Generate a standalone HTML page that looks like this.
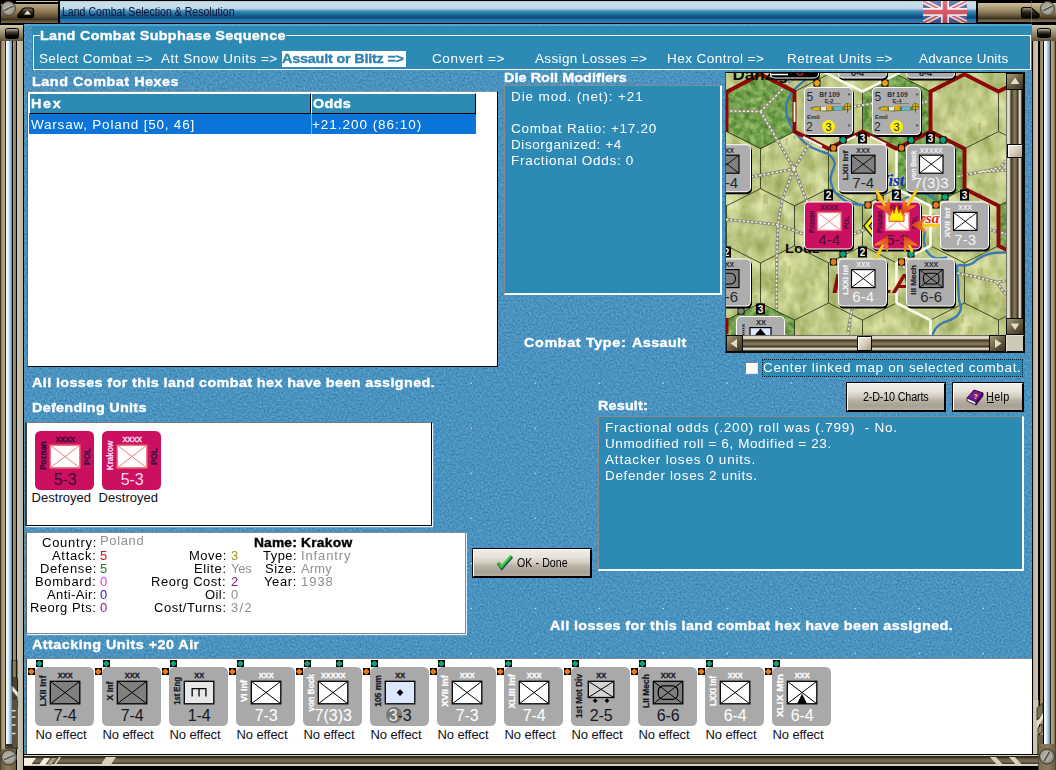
<!DOCTYPE html>
<html>
<head>
<meta charset="utf-8">
<title>Land Combat Selection &amp; Resolution</title>
<style>
html,body{margin:0;padding:0;background:#4a93c1;}
body{width:1056px;height:770px;overflow:hidden;font-family:"Liberation Sans",sans-serif;}
#root{position:relative;width:1056px;height:770px;overflow:hidden;background:#4a93c1;font-family:"Liberation Sans",sans-serif;}
#root div,#root span,#root svg{box-sizing:border-box;}
.btn{position:absolute;background:linear-gradient(#f0ede6 0%,#e6e2da 28%,#d2ccc0 48%,#bab2a4 62%,#a8a092 84%,#b6aea0 100%);border:1px solid #000;border-top-color:#fff;border-left-color:#fff;box-shadow:0 0 0 1px #000;}
</style>
</head>
<body>
<div id="root">
<svg style="position:absolute;left:0;top:0" width="1056" height="770"><defs>
<filter id="nz" x="0" y="0" width="100%" height="100%" color-interpolation-filters="sRGB"><feTurbulence type="fractalNoise" baseFrequency="0.5" numOctaves="2" seed="7" result="n"/><feColorMatrix type="matrix" values="0.32 0 0 0 0.13  0.24 0 0 0 0.453  0.19 0 0 0 0.655  0 0 0 0 1"/></filter>
</defs><rect width="1056" height="770" fill="#4a92bf"/><rect width="1056" height="770" filter="url(#nz)"/><rect x="470.6" y="382.6" width="1.200" height="1.200" fill="#e8f8ff" opacity="0.9"/><rect x="470.6" y="427.6" width="1.200" height="1.200" fill="#e8f8ff" opacity="0.9"/><rect x="470.6" y="472.7" width="1.200" height="1.200" fill="#e8f8ff" opacity="0.9"/><rect x="470.6" y="517.7" width="1.200" height="1.200" fill="#e8f8ff" opacity="0.9"/><rect x="470.6" y="562.8" width="1.200" height="1.200" fill="#e8f8ff" opacity="0.9"/><rect x="470.6" y="607.9" width="1.200" height="1.200" fill="#e8f8ff" opacity="0.9"/><rect x="470.6" y="652.9" width="1.200" height="1.200" fill="#e8f8ff" opacity="0.9"/><rect x="534.6" y="382.6" width="1.200" height="1.200" fill="#e8f8ff" opacity="0.9"/><rect x="534.6" y="427.6" width="1.200" height="1.200" fill="#e8f8ff" opacity="0.9"/><rect x="534.6" y="472.7" width="1.200" height="1.200" fill="#e8f8ff" opacity="0.9"/><rect x="534.6" y="517.7" width="1.200" height="1.200" fill="#e8f8ff" opacity="0.9"/><rect x="534.6" y="562.8" width="1.200" height="1.200" fill="#e8f8ff" opacity="0.9"/><rect x="534.6" y="607.9" width="1.200" height="1.200" fill="#e8f8ff" opacity="0.9"/><rect x="534.6" y="652.9" width="1.200" height="1.200" fill="#e8f8ff" opacity="0.9"/><rect x="598.6" y="382.6" width="1.200" height="1.200" fill="#e8f8ff" opacity="0.9"/><rect x="598.6" y="427.6" width="1.200" height="1.200" fill="#e8f8ff" opacity="0.9"/><rect x="598.6" y="472.7" width="1.200" height="1.200" fill="#e8f8ff" opacity="0.9"/><rect x="598.6" y="517.7" width="1.200" height="1.200" fill="#e8f8ff" opacity="0.9"/><rect x="598.6" y="562.8" width="1.200" height="1.200" fill="#e8f8ff" opacity="0.9"/><rect x="598.6" y="607.9" width="1.200" height="1.200" fill="#e8f8ff" opacity="0.9"/><rect x="598.6" y="652.9" width="1.200" height="1.200" fill="#e8f8ff" opacity="0.9"/><rect x="662.6" y="382.6" width="1.200" height="1.200" fill="#e8f8ff" opacity="0.9"/><rect x="662.6" y="427.6" width="1.200" height="1.200" fill="#e8f8ff" opacity="0.9"/><rect x="662.6" y="472.7" width="1.200" height="1.200" fill="#e8f8ff" opacity="0.9"/><rect x="662.6" y="517.7" width="1.200" height="1.200" fill="#e8f8ff" opacity="0.9"/><rect x="662.6" y="562.8" width="1.200" height="1.200" fill="#e8f8ff" opacity="0.9"/><rect x="662.6" y="607.9" width="1.200" height="1.200" fill="#e8f8ff" opacity="0.9"/><rect x="662.6" y="652.9" width="1.200" height="1.200" fill="#e8f8ff" opacity="0.9"/><rect x="726.6" y="382.6" width="1.200" height="1.200" fill="#e8f8ff" opacity="0.9"/><rect x="726.6" y="427.6" width="1.200" height="1.200" fill="#e8f8ff" opacity="0.9"/><rect x="726.6" y="472.7" width="1.200" height="1.200" fill="#e8f8ff" opacity="0.9"/><rect x="726.6" y="517.7" width="1.200" height="1.200" fill="#e8f8ff" opacity="0.9"/><rect x="726.6" y="562.8" width="1.200" height="1.200" fill="#e8f8ff" opacity="0.9"/><rect x="726.6" y="607.9" width="1.200" height="1.200" fill="#e8f8ff" opacity="0.9"/><rect x="726.6" y="652.9" width="1.200" height="1.200" fill="#e8f8ff" opacity="0.9"/><rect x="790.6" y="382.6" width="1.200" height="1.200" fill="#e8f8ff" opacity="0.9"/><rect x="790.6" y="427.6" width="1.200" height="1.200" fill="#e8f8ff" opacity="0.9"/><rect x="790.6" y="472.7" width="1.200" height="1.200" fill="#e8f8ff" opacity="0.9"/><rect x="790.6" y="517.7" width="1.200" height="1.200" fill="#e8f8ff" opacity="0.9"/><rect x="790.6" y="562.8" width="1.200" height="1.200" fill="#e8f8ff" opacity="0.9"/><rect x="790.6" y="607.9" width="1.200" height="1.200" fill="#e8f8ff" opacity="0.9"/><rect x="790.6" y="652.9" width="1.200" height="1.200" fill="#e8f8ff" opacity="0.9"/><rect x="854.6" y="382.6" width="1.200" height="1.200" fill="#e8f8ff" opacity="0.9"/><rect x="854.6" y="427.6" width="1.200" height="1.200" fill="#e8f8ff" opacity="0.9"/><rect x="854.6" y="472.7" width="1.200" height="1.200" fill="#e8f8ff" opacity="0.9"/><rect x="854.6" y="517.7" width="1.200" height="1.200" fill="#e8f8ff" opacity="0.9"/><rect x="854.6" y="562.8" width="1.200" height="1.200" fill="#e8f8ff" opacity="0.9"/><rect x="854.6" y="607.9" width="1.200" height="1.200" fill="#e8f8ff" opacity="0.9"/><rect x="854.6" y="652.9" width="1.200" height="1.200" fill="#e8f8ff" opacity="0.9"/><rect x="918.6" y="382.6" width="1.200" height="1.200" fill="#e8f8ff" opacity="0.9"/><rect x="918.6" y="427.6" width="1.200" height="1.200" fill="#e8f8ff" opacity="0.9"/><rect x="918.6" y="472.7" width="1.200" height="1.200" fill="#e8f8ff" opacity="0.9"/><rect x="918.6" y="517.7" width="1.200" height="1.200" fill="#e8f8ff" opacity="0.9"/><rect x="918.6" y="562.8" width="1.200" height="1.200" fill="#e8f8ff" opacity="0.9"/><rect x="918.6" y="607.9" width="1.200" height="1.200" fill="#e8f8ff" opacity="0.9"/><rect x="918.6" y="652.9" width="1.200" height="1.200" fill="#e8f8ff" opacity="0.9"/><rect x="982.6" y="382.6" width="1.200" height="1.200" fill="#e8f8ff" opacity="0.9"/><rect x="982.6" y="427.6" width="1.200" height="1.200" fill="#e8f8ff" opacity="0.9"/><rect x="982.6" y="472.7" width="1.200" height="1.200" fill="#e8f8ff" opacity="0.9"/><rect x="982.6" y="517.7" width="1.200" height="1.200" fill="#e8f8ff" opacity="0.9"/><rect x="982.6" y="562.8" width="1.200" height="1.200" fill="#e8f8ff" opacity="0.9"/><rect x="982.6" y="607.9" width="1.200" height="1.200" fill="#e8f8ff" opacity="0.9"/><rect x="982.6" y="652.9" width="1.200" height="1.200" fill="#e8f8ff" opacity="0.9"/></svg>
<div style="position:absolute;left:0px;top:0px;width:1056px;height:24px;background:linear-gradient(#000 0,#000 0.800px,#a8c4d0 1px,#c6dce8 2px,#c8dde9 8px,#9cc4dc 9.500px,#5a9cc4 10.500px,#3484b0 12px,#2270a0 14px,#145888 16px,#0c4a78 18px,#2472a8 19.500px,#2c7ab0 22.500px,#000 22.800px,#000 24px);"></div>
<div style="position:absolute;left:0px;top:1px;width:60px;height:23px;background:#000;"></div>
<div style="position:absolute;left:1px;top:3.5px;width:57px;height:19px;background:linear-gradient(#b8a884 0,#a4926c 20%,#86744e 45%,#5a4a30 70%,#3a2e1c 82%,#665638 90%,#72623e 100%);"></div>
<div style="position:absolute;left:16px;top:1px;width:42px;height:1.3px;background:#d0c8b0;"></div>
<div style="position:absolute;left:978px;top:1px;width:62px;height:1.3px;background:#b8d0e0;"></div>
<svg style="position:absolute;left:0;top:0" width="60" height="24">
<circle cx="8.5" cy="8.5" r="7" fill="#8d8a80" stroke="#4a4538" stroke-width="1"/><circle cx="8" cy="8" r="5.5" fill="#a8a59b"/><path d="M3.5 10.5 L13 6" stroke="#55524a" stroke-width="1.6"/><path d="M3.5 9.3 L12.6 5" stroke="#d8d6cc" stroke-width="0.7"/>
<defs><linearGradient id="slg" x1="0" y1="0" x2="0" y2="1"><stop offset="0" stop-color="#8a8068"/><stop offset="0.45" stop-color="#2a241a"/><stop offset="1" stop-color="#000"/></linearGradient></defs><path d="M18 15.2 L22.4 9.4 Q23.2 8 25 8 L31 8 Q33.6 8 33.6 10.4 L33.6 15 Q33.6 17.6 31 17.6 L20 17.6 Q17 17.6 18 15.2 Z" fill="url(#slg)" stroke="#000" stroke-width="1.2"/>
<path d="M24 14.500 L27.500 10.500 L31 14.500 Z" fill="#e8e4d4"/>
</svg>
<div style="position:absolute;left:976px;top:1px;width:80px;height:23px;background:#000;"></div>
<div style="position:absolute;left:978px;top:3px;width:78px;height:19px;background:linear-gradient(#cbbd9c 0,#b5a482 20%,#93825f 45%,#5e5038 70%,#3a3020 82%,#6e6046 90%,#7a6c50 100%);"></div>
<svg style="position:absolute;left:976px;top:0" width="80" height="24">
<defs><linearGradient id="slg2" x1="0" y1="0" x2="0" y2="1"><stop offset="0" stop-color="#a89e88"/><stop offset="0.45" stop-color="#2a241a"/><stop offset="1" stop-color="#000"/></linearGradient></defs><path d="M45.500 10 Q45.500 7.500 48 7.500 L55 7.500 L63 14.500 Q64 18 60 18 L48 18 Q45.500 18 45.500 15.500 Z" fill="url(#slg2)" stroke="#000" stroke-width="1.200"/>
<circle cx="71.500" cy="8.500" r="7" fill="#8d8a80" stroke="#4a4538" stroke-width="1"/><circle cx="71" cy="8" r="5.500" fill="#a8a59b"/><path d="M67 10.500 L76 6" stroke="#55524a" stroke-width="1.600"/><path d="M67 9.300 L75.600 5" stroke="#d8d6cc" stroke-width="0.700"/>
<path d="M55.500 1 L55.500 23" stroke="#5c8cb8" stroke-width="0.600"/>
</svg>
<svg style="position:absolute;left:923px;top:1px" width="44" height="22" viewBox="0 0 44 22">
<defs><linearGradient id="fg" x1="0" y1="0" x2="0" y2="1"><stop offset="0" stop-color="#fff" stop-opacity="0.25"/><stop offset="0.45" stop-color="#fff" stop-opacity="0.1"/><stop offset="1" stop-color="#000" stop-opacity="0.15"/></linearGradient></defs>
<rect width="44" height="22" fill="#4a5a96"/>
<path d="M0 0 L44 22 M44 0 L0 22" stroke="#f0ecf0" stroke-width="5"/>
<path d="M0 0 L44 22 M44 0 L0 22" stroke="#d8505c" stroke-width="1.800"/>
<path d="M22 0 V22 M0 11 H44" stroke="#f0ecf0" stroke-width="8"/>
<path d="M22 0 V22 M0 11 H44" stroke="#d44858" stroke-width="4.500"/>
<rect width="44" height="22" fill="url(#fg)"/>
</svg>
<span style="position:absolute;left:61.5px;top:6.00px;font-size:12px;line-height:12px;white-space:pre;color:#0c1238;transform:scaleX(0.8800);transform-origin:0 0;">Land Combat Selection &amp; Resolution</span>
<div style="position:absolute;left:0px;top:24px;width:24px;height:732px;background:linear-gradient(90deg,#3a3020 0,#3a3020 0.800px,#7a6c4c 0.800px,#a89a78 2.500px,#b8aa88 4.800px,#2a2418 5px,#2a2418 5.800px,#f8fbfe 6px,#eef4fa 8px,#c0d8ee 9.2px,#88b0d8 10.8px,#5c88bc 12px,#000 12px,#000 13px,#a89878 13px,#8a7c5c 16px,#000 16px,#000 17.500px,#cfc6b0 17.500px,#c4bca4 21px,#b8b098 23px,#000 23px,#000 24px);"></div>
<div style="position:absolute;left:0px;top:24px;width:24px;height:17px;background:linear-gradient(#000 0,#000 1px,#cfc6ac 1px,#b0a484 6px,#857858 12px,#5a5038 17px);"></div>
<div style="position:absolute;left:5px;top:27.5px;width:14px;height:11px;background:linear-gradient(#b8b09c,#4a4436 35%,#0c0a06 70%,#000);border-radius:2.500px;border:1px solid #000;"></div>
<div style="position:absolute;left:23px;top:24px;width:1px;height:732px;background:#000;"></div>
<svg style="position:absolute;left:0;top:660px" width="24" height="90">
<rect x="12" y="0" width="5.6" height="86" fill="#4a4232"/>
<rect x="13" y="0" width="3.4" height="17" fill="#8a7c5c"/>
<path d="M12 0 V26 L17.6 32 V20 L16.4 17 V0 Z" fill="none" stroke="#15120c" stroke-width="1"/>
<path d="M12.5 26 L17.6 32 V37 L12.5 31 Z" fill="#ece6d6"/>
<path d="M15 37.5 L17.6 40 V47 L15 45 Z" fill="#a89a78" stroke="#15120c" stroke-width="0.8"/>
<rect x="12" y="40" width="5.6" height="46" fill="#5a5040"/>
<path d="M12 50.7 H15.6 M12 57 H15.6 M12 65 H15.6 M12 73.5 H15.6" stroke="#e0dac8" stroke-width="1.6"/>
<path d="M5 84 H12.5 V86 Q9 90 6.2 86 Z" fill="#3a3020"/>
<rect x="5" y="86.5" width="13" height="4" fill="#4a4030"/>
</svg>
<div style="position:absolute;left:1032px;top:24px;width:24px;height:732px;background:linear-gradient(90deg,#000 0,#000 1px,#b8b098 1px,#c4bca4 3px,#cfc6b0 6.500px,#000 6.500px,#000 7.800px,#8a7c5c 7.800px,#a89878 11px,#000 11px,#000 12px,#f8fbfe 12px,#eef4fa 14px,#c0d8ee 15.2px,#88b0d8 16.8px,#5c88bc 18px,#2a2418 18px,#2a2418 18.700px,#b8aa88 18.700px,#a89a78 21px,#7a6c4c 23.200px,#3a3020 23.200px,#3a3020 24px);"></div>
<div style="position:absolute;left:1032px;top:24px;width:24px;height:17px;background:linear-gradient(#000 0,#000 1px,#cfc6ac 1px,#b0a484 6px,#857858 12px,#5a5038 17px);"></div>
<div style="position:absolute;left:1037px;top:27.5px;width:14px;height:10.5px;background:linear-gradient(#c8c0ac,#4a4436 35%,#0c0a06 70%,#000);border-radius:2.500px;border:1px solid #000;"></div>
<svg style="position:absolute;left:1032px;top:700px" width="24" height="70">
<rect x="1" y="0" width="5.5" height="56" fill="#cfc6b0"/>
<path d="M5 8 L11 3 V14 L5 20 Z" fill="#7a7058" stroke="#2a261c" stroke-width="0.800"/>
<path d="M5 22 L11 13 V19 L5 28 Z" fill="#e4dece"/>
<path d="M6 28 L10 24 V32 L6 35 Z" fill="#9a9078" stroke="#2a261c" stroke-width="0.800"/>
<rect x="5" y="35" width="6" height="20" fill="#6a6048"/>
</svg>
<div style="position:absolute;left:0px;top:754px;width:1056px;height:16px;background:linear-gradient(#000 0,#000 0.800px,#e8e2d0 0.800px,#d0c8b4 2.500px,#2a261c 2.500px,#3a3426 3.500px,#6a6048 5px,#7a7058 7px,#5c5440 9px,#2a261c 10px,#e0dac8 10px,#d0c8b4 12.500px,#000 12.500px,#000 16px);"></div>
<svg style="position:absolute;left:0;top:754px" width="1056" height="16">
<path d="M24 4 H36 L31 11 H24 Z" fill="#f4f0e4"/>
<path d="M44 4 H50 L45 11 H39 Z" fill="#f4f0e4"/>
<path d="M52 4 H56 L51 11 H47 Z" fill="#a89e84"/>
<path d="M101 10.500 L106 3 H116 L111 10.500 Z" fill="#d8d2c0"/><path d="M60 3 L55 10.500" stroke="#e0dac8" stroke-width="1.500"/>
<path d="M990 3 L998 12 H1004 L996 3 Z M1009 3 L1017 12 H1023 L1015 3 Z" fill="#d8d2c0"/>
</svg>
<div style="position:absolute;left:0px;top:749px;width:24px;height:21px;background:linear-gradient(90deg,#3a3020 0,#6a5c40 1px,#8a7c5c 8px,#6a5c40 16px,#000 16.5px,#000 17.5px,#cfc6b0 17.5px,#b8b098 23px,#000 23px);"></div>
<div style="position:absolute;left:1038px;top:744px;width:18px;height:26px;background:linear-gradient(90deg,#2a2418 0,#7a6c4c 1px,#8a7c5c 10px,#6a5c40 17px,#3a3020 18px);"></div>
<svg style="position:absolute;left:0;top:746px" width="24" height="24"><circle cx="9" cy="11.500" r="7.500" fill="#8d8a80" stroke="#3a3426" stroke-width="1"/><circle cx="8.500" cy="11" r="5.800" fill="#aaa79d"/><path d="M4 13.500 L14 9" stroke="#55524a" stroke-width="1.700"/><path d="M4 12.300 L13.600 8" stroke="#d8d6cc" stroke-width="0.700"/></svg>
<svg style="position:absolute;left:1034px;top:745px" width="22" height="25"><circle cx="13" cy="11.500" r="7.500" fill="#8d8a80" stroke="#3a3426" stroke-width="1"/><circle cx="12.500" cy="11" r="5.800" fill="#aaa79d"/><path d="M10 16 L15.500 6.500" stroke="#55524a" stroke-width="1.700"/><path d="M9 15.300 L14.400 6" stroke="#d8d6cc" stroke-width="0.700"/></svg>
<div style="position:absolute;left:32px;top:26px;width:1000px;height:44px;background:#2d8ab5;"></div>
<div style="position:absolute;left:24px;top:24px;width:1008px;height:2px;background:rgba(90,180,225,0.55);"></div>
<div style="position:absolute;left:33px;top:35px;width:998px;height:35px;border:1px solid #fff;border-bottom:1.500px solid #f4f8fc;"></div>
<div style="position:absolute;left:40px;top:30px;width:246px;height:11px;background:#2d8ab5;"></div>
<span style="position:absolute;left:39.7px;top:30.00px;font-size:12.5px;line-height:12.5px;white-space:pre;color:#fff;font-weight:bold;-webkit-text-stroke:0.35px #fff;letter-spacing:0.282px;transform:scaleX(1.1500);transform-origin:0 0;">Land Combat Subphase Sequence</span>
<span style="position:absolute;left:38.6px;top:53.00px;font-size:12.5px;line-height:12.5px;white-space:pre;color:#fff;letter-spacing:0.329px;transform:scaleX(1.0800);transform-origin:0 0;">Select Combat =&gt;</span>
<span style="position:absolute;left:161px;top:53.00px;font-size:12.5px;line-height:12.5px;white-space:pre;color:#fff;letter-spacing:0.471px;transform:scaleX(1.0800);transform-origin:0 0;">Att Snow Units =&gt;</span>
<div style="position:absolute;left:282px;top:51px;width:124px;height:16px;background:#fff;"></div>
<span style="position:absolute;left:282.2px;top:53.00px;font-size:12.5px;line-height:12.5px;white-space:pre;color:#2d82b0;font-weight:bold;-webkit-text-stroke:0.35px #2d82b0;letter-spacing:-0.165px;transform:scaleX(1.1500);transform-origin:0 0;">Assault or Blitz =&gt;</span>
<span style="position:absolute;left:431.6px;top:53.00px;font-size:12.5px;line-height:12.5px;white-space:pre;color:#fff;letter-spacing:0.577px;transform:scaleX(1.0800);transform-origin:0 0;">Convert =&gt;</span>
<span style="position:absolute;left:535.2px;top:53.00px;font-size:12.5px;line-height:12.5px;white-space:pre;color:#fff;letter-spacing:0.335px;transform:scaleX(1.0800);transform-origin:0 0;">Assign Losses =&gt;</span>
<span style="position:absolute;left:667.2px;top:53.00px;font-size:12.5px;line-height:12.5px;white-space:pre;color:#fff;letter-spacing:0.427px;transform:scaleX(1.0800);transform-origin:0 0;">Hex Control =&gt;</span>
<span style="position:absolute;left:786.6px;top:53.00px;font-size:12.5px;line-height:12.5px;white-space:pre;color:#fff;letter-spacing:0.438px;transform:scaleX(1.0800);transform-origin:0 0;">Retreat Units =&gt;</span>
<span style="position:absolute;left:918.6px;top:53.00px;font-size:12.5px;line-height:12.5px;white-space:pre;color:#fff;letter-spacing:0.165px;transform:scaleX(1.0800);transform-origin:0 0;">Advance Units</span>
<span style="position:absolute;left:31.6px;top:76.00px;font-size:12.5px;line-height:12.5px;white-space:pre;color:#fff;font-weight:bold;-webkit-text-stroke:0.35px #fff;letter-spacing:0.457px;transform:scaleX(1.1500);transform-origin:0 0;">Land Combat Hexes</span>
<div style="position:absolute;left:26.5px;top:91px;width:471.5px;height:275.75px;background:#fff;border-top:1px solid #8098a8;border-left:1.500px solid #506878;border-right:1.250px solid #000;border-bottom:1.350px solid #000;"></div>
<div style="position:absolute;left:29px;top:94px;width:447px;height:19.5px;background:#2d8ab5;"></div>
<div style="position:absolute;left:28.5px;top:93px;width:282.5px;height:20.7px;border-top:1px solid #fff;border-left:1px solid #fff;border-right:1px solid #000;border-bottom:1.200px solid #000;"></div>
<div style="position:absolute;left:311px;top:93px;width:165px;height:20.7px;border-top:1px solid #fff;border-left:1px solid #fff;border-right:1px solid #000;border-bottom:1.200px solid #000;"></div>
<span style="position:absolute;left:31px;top:98.00px;font-size:12.5px;line-height:12.5px;white-space:pre;color:#fff;font-weight:bold;-webkit-text-stroke:0.35px #fff;letter-spacing:1.444px;transform:scaleX(1.1500);transform-origin:0 0;">Hex</span>
<span style="position:absolute;left:313px;top:98.00px;font-size:12.5px;line-height:12.5px;white-space:pre;color:#fff;font-weight:bold;-webkit-text-stroke:0.35px #fff;letter-spacing:0.276px;transform:scaleX(1.1500);transform-origin:0 0;">Odds</span>
<div style="position:absolute;left:29px;top:113.7px;width:447px;height:20px;background:#0a74d8;"></div>
<div style="position:absolute;left:310.5px;top:113.7px;width:1px;height:20px;background:#7ab8ec;"></div>
<span style="position:absolute;left:30.6px;top:119.00px;font-size:12.5px;line-height:12.5px;white-space:pre;color:#fff;letter-spacing:0.731px;transform:scaleX(1.0800);transform-origin:0 0;">Warsaw, Poland [50, 46]</span>
<span style="position:absolute;left:312.4px;top:119.00px;font-size:12.5px;line-height:12.5px;white-space:pre;color:#fff;letter-spacing:0.892px;transform:scaleX(1.0800);transform-origin:0 0;">+21.200 (86:10)</span>
<span style="position:absolute;left:504px;top:72.00px;font-size:12.5px;line-height:12.5px;white-space:pre;color:#fff;font-weight:bold;-webkit-text-stroke:0.35px #fff;letter-spacing:0.066px;transform:scaleX(1.1500);transform-origin:0 0;">Die Roll Modifiers</span>
<div style="position:absolute;left:504px;top:85px;width:218px;height:210px;background:#2d8ab5;border-top:1.500px solid #8a8a8a;border-left:1.500px solid #8a8a8a;border-right:2px solid #f4fcff;border-bottom:2px solid #f4fcff;"></div>
<span style="position:absolute;left:510.5px;top:91.00px;font-size:12.5px;line-height:12.5px;white-space:pre;color:#fff;letter-spacing:0.811px;transform:scaleX(1.0800);transform-origin:0 0;">Die mod. (net): +21</span>
<span style="position:absolute;left:510.5px;top:123.00px;font-size:12.5px;line-height:12.5px;white-space:pre;color:#fff;letter-spacing:0.657px;transform:scaleX(1.0800);transform-origin:0 0;">Combat Ratio: +17.20</span>
<span style="position:absolute;left:510.5px;top:139.00px;font-size:12.5px;line-height:12.5px;white-space:pre;color:#fff;letter-spacing:0.525px;transform:scaleX(1.0800);transform-origin:0 0;">Disorganized: +4</span>
<span style="position:absolute;left:510.5px;top:155.00px;font-size:12.5px;line-height:12.5px;white-space:pre;color:#fff;letter-spacing:0.658px;transform:scaleX(1.0800);transform-origin:0 0;">Fractional Odds: 0</span>
<span style="position:absolute;left:523.8px;top:337.00px;font-size:12.5px;line-height:12.5px;white-space:pre;color:#fff;font-weight:bold;-webkit-text-stroke:0.35px #fff;letter-spacing:0.547px;transform:scaleX(1.1500);transform-origin:0 0;">Combat Type:</span>
<span style="position:absolute;left:631.8px;top:337.00px;font-size:12.5px;line-height:12.5px;white-space:pre;color:#fff;font-weight:bold;-webkit-text-stroke:0.35px #fff;letter-spacing:0.329px;transform:scaleX(1.1500);transform-origin:0 0;">Assault</span>
<div style="position:absolute;left:745px;top:361.5px;width:12.5px;height:12.5px;background:#fff;border-top:1.500px solid #808080;border-left:1.500px solid #808080;border-right:1px solid #e8e8e8;border-bottom:1px solid #e8e8e8;"></div>
<div style="position:absolute;left:762px;top:359px;width:261px;height:17.5px;background:#2d8ab5;border:1px dotted #0a2030;"></div>
<span style="position:absolute;left:763px;top:362.00px;font-size:12.5px;line-height:12.5px;white-space:pre;color:#fff;letter-spacing:0.609px;transform:scaleX(1.0800);transform-origin:0 0;">Center linked map on selected combat.</span>
<div class="btn" style="left:847px;top:383px;width:98px;height:28px"></div>
<span style="position:absolute;left:862.6px;top:391.00px;font-size:12px;line-height:12px;white-space:pre;color:#000;letter-spacing:-0.206px;transform:scaleX(0.9000);transform-origin:0 0;">2-D-10 Charts</span>
<div class="btn" style="left:953px;top:383px;width:70px;height:28px"></div>
<span style="position:absolute;left:986px;top:391.00px;font-size:12px;line-height:12px;white-space:pre;color:#000;letter-spacing:0.363px;transform:scaleX(0.9000);transform-origin:0 0;">Help</span>
<div style="position:absolute;left:987px;top:402px;width:7px;height:1px;background:#000;"></div>
<svg style="position:absolute;left:966px;top:388px" width="18" height="18" viewBox="0 0 18 18">
<path d="M1 10 L8 2 L17 5 L10 14 Z" fill="#7a1a9a" stroke="#2a0638" stroke-width="1"/>
<path d="M1 10 L10 14 L10 17 L1 13 Z" fill="#f4f0f8" stroke="#2a0638" stroke-width="0.800"/>
<path d="M10 14 L17 5 L17 8 L10 17 Z" fill="#4a0e62" stroke="#2a0638" stroke-width="0.800"/>
<text x="7.500" y="10.500" font-size="7" font-weight="bold" fill="#ffe040" font-family="Liberation Sans">?</text>
</svg>
<div class="btn" style="left:473px;top:549px;width:118px;height:28px"></div>
<span style="position:absolute;left:517px;top:557.00px;font-size:12px;line-height:12px;white-space:pre;color:#000;letter-spacing:0.114px;transform:scaleX(0.8800);transform-origin:0 0;">OK - Done</span>
<svg style="position:absolute;left:496px;top:554px" width="18" height="17" viewBox="0 0 18 17">
<path d="M2.2 9.2 L5.8 14 L15.8 2.6" fill="none" stroke="#103060" stroke-width="3.2" stroke-linejoin="miter"/>
<path d="M1.8 8.6 L5.4 13.2 L15.4 2" fill="none" stroke="#24b434" stroke-width="2.6" stroke-linejoin="miter"/>
<path d="M2 8 L5.4 12.2 L15 1.6" fill="none" stroke="#58e060" stroke-width="0.9"/>
</svg>
<span style="position:absolute;left:597.8px;top:400.00px;font-size:12.5px;line-height:12.5px;white-space:pre;color:#fff;font-weight:bold;-webkit-text-stroke:0.35px #fff;letter-spacing:0.155px;transform:scaleX(1.1500);transform-origin:0 0;">Result:</span>
<div style="position:absolute;left:598px;top:416px;width:426px;height:155px;background:#2d8ab5;border-top:1.500px solid #8a8a8a;border-left:1.500px solid #8a8a8a;border-right:2px solid #f4fcff;border-bottom:2px solid #f4fcff;"></div>
<span style="position:absolute;left:604.5px;top:422.00px;font-size:12.5px;line-height:12.5px;white-space:pre;color:#fff;letter-spacing:0.745px;transform:scaleX(1.0800);transform-origin:0 0;">Fractional odds (.200) roll was (.799)  - No.</span>
<span style="position:absolute;left:604.5px;top:438.00px;font-size:12.5px;line-height:12.5px;white-space:pre;color:#fff;letter-spacing:0.560px;transform:scaleX(1.0800);transform-origin:0 0;">Unmodified roll = 6, Modified = 23.</span>
<span style="position:absolute;left:604.5px;top:454.00px;font-size:12.5px;line-height:12.5px;white-space:pre;color:#fff;letter-spacing:0.763px;transform:scaleX(1.0800);transform-origin:0 0;">Attacker loses 0 units.</span>
<span style="position:absolute;left:604.5px;top:470.00px;font-size:12.5px;line-height:12.5px;white-space:pre;color:#fff;letter-spacing:0.586px;transform:scaleX(1.0800);transform-origin:0 0;">Defender loses 2 units.</span>
<span style="position:absolute;left:31.6px;top:377.00px;font-size:12.5px;line-height:12.5px;white-space:pre;color:#fff;font-weight:bold;-webkit-text-stroke:0.35px #fff;letter-spacing:0.336px;transform:scaleX(1.1500);transform-origin:0 0;">All losses for this land combat hex have been assigned.</span>
<span style="position:absolute;left:549.5px;top:620.00px;font-size:12.5px;line-height:12.5px;white-space:pre;color:#fff;font-weight:bold;-webkit-text-stroke:0.35px #fff;letter-spacing:0.336px;transform:scaleX(1.1500);transform-origin:0 0;">All losses for this land combat hex have been assigned.</span>
<span style="position:absolute;left:31.6px;top:402.00px;font-size:12.5px;line-height:12.5px;white-space:pre;color:#fff;font-weight:bold;-webkit-text-stroke:0.35px #fff;letter-spacing:0.260px;transform:scaleX(1.1500);transform-origin:0 0;">Defending Units</span>
<div style="position:absolute;left:25px;top:421.5px;width:406.8px;height:104.2px;background:#fff;border-top:1.500px solid #7a7a7a;border-left:2px solid #404040;border-right:1.200px solid #000;border-bottom:1.500px solid #000;box-shadow:1.200px 1.200px 0 #ecfaff;"></div>
<span style="position:absolute;left:31.6px;top:491.00px;font-size:13px;line-height:13px;white-space:pre;color:#101020;letter-spacing:0.019px;">Destroyed</span>
<span style="position:absolute;left:98.6px;top:491.00px;font-size:13px;line-height:13px;white-space:pre;color:#101020;letter-spacing:0.019px;">Destroyed</span>
<div style="position:absolute;left:25.8px;top:532px;width:440.7px;height:101.6px;background:#fff;border:1px solid #8a8a8a;border-left:1.200px solid #5a5a5a;box-shadow:1px 1.200px 0 #d8f0fc;"></div>
<span style="position:absolute;left:41.6px;top:537.00px;font-size:12px;line-height:12px;white-space:pre;color:#000;letter-spacing:0.716px;transform:scaleX(1.0800);transform-origin:0 0;">Country:</span>
<span style="position:absolute;left:100.4px;top:535.00px;font-size:12px;line-height:12px;white-space:pre;color:#909090;letter-spacing:0.599px;transform:scaleX(1.0800);transform-origin:0 0;">Poland</span>
<span style="position:absolute;left:52.2px;top:550.00px;font-size:12px;line-height:12px;white-space:pre;color:#000;letter-spacing:0.645px;transform:scaleX(1.0800);transform-origin:0 0;">Attack:</span>
<span style="position:absolute;left:100.4px;top:550.00px;font-size:12px;line-height:12px;white-space:pre;color:#c81818;transform:scaleX(1.0800);transform-origin:0 0;">5</span>
<span style="position:absolute;left:39.6px;top:563.00px;font-size:12px;line-height:12px;white-space:pre;color:#000;letter-spacing:0.599px;transform:scaleX(1.0800);transform-origin:0 0;">Defense:</span>
<span style="position:absolute;left:100.4px;top:563.00px;font-size:12px;line-height:12px;white-space:pre;color:#208020;transform:scaleX(1.0800);transform-origin:0 0;">5</span>
<span style="position:absolute;left:35.2px;top:576.00px;font-size:12px;line-height:12px;white-space:pre;color:#000;letter-spacing:0.609px;transform:scaleX(1.0800);transform-origin:0 0;">Bombard:</span>
<span style="position:absolute;left:100.4px;top:576.00px;font-size:12px;line-height:12px;white-space:pre;color:#e838e8;transform:scaleX(1.0800);transform-origin:0 0;">0</span>
<span style="position:absolute;left:46.6px;top:589.00px;font-size:12px;line-height:12px;white-space:pre;color:#000;letter-spacing:0.382px;transform:scaleX(1.0800);transform-origin:0 0;">Anti-Air:</span>
<span style="position:absolute;left:100.4px;top:589.00px;font-size:12px;line-height:12px;white-space:pre;color:#1818c0;transform:scaleX(1.0800);transform-origin:0 0;">0</span>
<span style="position:absolute;left:30.2px;top:602.00px;font-size:12px;line-height:12px;white-space:pre;color:#000;letter-spacing:0.469px;transform:scaleX(1.0800);transform-origin:0 0;">Reorg Pts:</span>
<span style="position:absolute;left:100.4px;top:602.00px;font-size:12px;line-height:12px;white-space:pre;color:#802088;transform:scaleX(1.0800);transform-origin:0 0;">0</span>
<span style="position:absolute;left:188.6px;top:550.00px;font-size:12px;line-height:12px;white-space:pre;color:#000;letter-spacing:0.486px;transform:scaleX(1.0800);transform-origin:0 0;">Move:</span>
<span style="position:absolute;left:230.8px;top:550.00px;font-size:12px;line-height:12px;white-space:pre;color:#98982c;transform:scaleX(1.0800);transform-origin:0 0;">3</span>
<span style="position:absolute;left:194px;top:563.00px;font-size:12px;line-height:12px;white-space:pre;color:#000;letter-spacing:0.588px;transform:scaleX(1.0800);transform-origin:0 0;">Elite:</span>
<span style="position:absolute;left:230.8px;top:563.00px;font-size:12px;line-height:12px;white-space:pre;color:#909090;letter-spacing:-0.159px;transform:scaleX(1.0800);transform-origin:0 0;">Yes</span>
<span style="position:absolute;left:151.4px;top:576.00px;font-size:12px;line-height:12px;white-space:pre;color:#000;letter-spacing:0.504px;transform:scaleX(1.0800);transform-origin:0 0;">Reorg Cost:</span>
<span style="position:absolute;left:230.8px;top:576.00px;font-size:12px;line-height:12px;white-space:pre;color:#802088;transform:scaleX(1.0800);transform-origin:0 0;">2</span>
<span style="position:absolute;left:205.2px;top:589.00px;font-size:12px;line-height:12px;white-space:pre;color:#000;letter-spacing:0.420px;transform:scaleX(1.0800);transform-origin:0 0;">Oil:</span>
<span style="position:absolute;left:230.8px;top:589.00px;font-size:12px;line-height:12px;white-space:pre;color:#909090;transform:scaleX(1.0800);transform-origin:0 0;">0</span>
<span style="position:absolute;left:154px;top:602.00px;font-size:12px;line-height:12px;white-space:pre;color:#000;letter-spacing:0.509px;transform:scaleX(1.0800);transform-origin:0 0;">Cost/Turns:</span>
<span style="position:absolute;left:230.8px;top:602.00px;font-size:12px;line-height:12px;white-space:pre;color:#909090;letter-spacing:1.286px;transform:scaleX(1.0800);transform-origin:0 0;">3/2</span>
<span style="position:absolute;left:253.6px;top:537.00px;font-size:12px;line-height:12px;white-space:pre;color:#000;font-weight:bold;-webkit-text-stroke:0.35px #000;letter-spacing:0.132px;transform:scaleX(1.1500);transform-origin:0 0;">Name:</span>
<span style="position:absolute;left:300.8px;top:537.00px;font-size:12px;line-height:12px;white-space:pre;color:#000;font-weight:bold;-webkit-text-stroke:0.35px #000;letter-spacing:0.232px;transform:scaleX(1.1500);transform-origin:0 0;">Krakow</span>
<span style="position:absolute;left:262.8px;top:550.00px;font-size:12px;line-height:12px;white-space:pre;color:#000;letter-spacing:0.438px;transform:scaleX(1.0800);transform-origin:0 0;">Type:</span>
<span style="position:absolute;left:300.8px;top:550.00px;font-size:12px;line-height:12px;white-space:pre;color:#909090;letter-spacing:0.816px;transform:scaleX(1.0800);transform-origin:0 0;">Infantry</span>
<span style="position:absolute;left:265.2px;top:563.00px;font-size:12px;line-height:12px;white-space:pre;color:#000;letter-spacing:0.550px;transform:scaleX(1.0800);transform-origin:0 0;">Size:</span>
<span style="position:absolute;left:300.8px;top:563.00px;font-size:12px;line-height:12px;white-space:pre;color:#909090;letter-spacing:0.142px;transform:scaleX(1.0800);transform-origin:0 0;">Army</span>
<span style="position:absolute;left:264px;top:576.00px;font-size:12px;line-height:12px;white-space:pre;color:#000;letter-spacing:0.602px;transform:scaleX(1.0800);transform-origin:0 0;">Year:</span>
<span style="position:absolute;left:300.8px;top:576.00px;font-size:12px;line-height:12px;white-space:pre;color:#909090;letter-spacing:0.914px;transform:scaleX(1.0800);transform-origin:0 0;">1938</span>
<span style="position:absolute;left:31.8px;top:639.00px;font-size:12.5px;line-height:12.5px;white-space:pre;color:#fff;font-weight:bold;-webkit-text-stroke:0.35px #fff;letter-spacing:0.393px;transform:scaleX(1.1500);transform-origin:0 0;">Attacking Units +20 Air</span>
<div style="position:absolute;left:26px;top:657.8px;width:1006px;height:96.7px;background:#fff;border-top:1.400px solid #7a8a94;border-left:1.300px solid #4a5a64;"></div>
<svg style="position:absolute;left:35px;top:431px" width="59" height="59" viewBox="0 0 59 59" font-family="Liberation Sans, sans-serif"><rect x="0" y="0" width="59" height="59" rx="5.500" fill="#cc1060"/><rect x="15.3" y="14.3" width="29.5" height="22.5" fill="#fff" stroke="#f07878" stroke-width="1.5"/><path d="M15.3 14.3 L44.8 36.8 M44.8 14.3 L15.3 36.8" stroke="#e88080" stroke-width="1" fill="none"/><text x="30.200" y="11.300" font-size="8" font-weight="bold" text-anchor="middle" fill="#300a34" stroke="#300a34" stroke-width="0.300" textLength="19.6" lengthAdjust="spacingAndGlyphs">XXXX</text><text x="30.200" y="53.800" font-size="16" text-anchor="middle" fill="#300a34">5-3</text><text transform="translate(11.300,24.5) rotate(-90)" font-size="8.600" font-weight="bold" text-anchor="middle" fill="#300a34" stroke="#300a34" stroke-width="0.250" textLength="28.5" lengthAdjust="spacingAndGlyphs">Poznan</text><text transform="translate(55,25.500) rotate(-90)" font-size="8.400" font-weight="bold" text-anchor="middle" fill="#3a1040" stroke="#3a1040" stroke-width="0.250">POL</text></svg>
<svg style="position:absolute;left:102px;top:431px" width="59" height="59" viewBox="0 0 59 59" font-family="Liberation Sans, sans-serif"><rect x="0" y="0" width="59" height="59" rx="5.500" fill="#cc1060"/><rect x="15.3" y="14.3" width="29.5" height="22.5" fill="#fff" stroke="#f07878" stroke-width="1.5"/><path d="M15.3 14.3 L44.8 36.8 M44.8 14.3 L15.3 36.8" stroke="#e88080" stroke-width="1" fill="none"/><text x="30.200" y="11.300" font-size="8" font-weight="bold" text-anchor="middle" fill="#fbd8ec" stroke="#fbd8ec" stroke-width="0.300" textLength="19.6" lengthAdjust="spacingAndGlyphs">XXXX</text><text x="30.200" y="53.800" font-size="16" text-anchor="middle" fill="#fbd8ec">5-3</text><text transform="translate(11.300,24.5) rotate(-90)" font-size="8.600" font-weight="bold" text-anchor="middle" fill="#fbd8ec" stroke="#fbd8ec" stroke-width="0.250" textLength="29.5" lengthAdjust="spacingAndGlyphs">Krakow</text><text transform="translate(55,25.500) rotate(-90)" font-size="8.400" font-weight="bold" text-anchor="middle" fill="#3a1040" stroke="#3a1040" stroke-width="0.250">POL</text></svg>
<svg style="position:absolute;left:35px;top:667px" width="59" height="59" viewBox="0 0 59 59" font-family="Liberation Sans, sans-serif"><rect x="0" y="0" width="59" height="59" rx="5.500" fill="#a9a9a9"/><rect x="15.3" y="14.3" width="29.5" height="22.5" fill="#808080" stroke="#000" stroke-width="1.3"/><path d="M15.3 14.3 L44.8 36.8 M44.8 14.3 L15.3 36.8" stroke="#000" stroke-width="1" fill="none"/><text x="30.200" y="11.300" font-size="8" font-weight="bold" text-anchor="middle" fill="#161624" stroke="#161624" stroke-width="0.300" textLength="14.7" lengthAdjust="spacingAndGlyphs">XXX</text><text x="30.200" y="53.800" font-size="16" text-anchor="middle" fill="#161624">7-4</text><text transform="translate(11.300,24) rotate(-90)" font-size="8.600" font-weight="bold" text-anchor="middle" fill="#161624" stroke="#161624" stroke-width="0.250" textLength="31" lengthAdjust="spacingAndGlyphs">LXII Inf</text></svg>
<div style="position:absolute;left:36.2px;top:660px;width:7px;height:7px;background:#000"><div style="position:absolute;left:1.200px;top:1.200px;width:4.600px;height:4.600px;border-radius:1.200px;transform:rotate(45deg);background:#10a080"></div></div>
<div style="position:absolute;left:28px;top:668px;width:7px;height:7px;background:#000"><div style="position:absolute;left:1.200px;top:1.200px;width:4.600px;height:4.600px;border-radius:1.200px;transform:rotate(45deg);background:#e87818"></div></div>
<span style="position:absolute;left:35.4px;top:728.00px;font-size:13px;line-height:13px;white-space:pre;color:#101020;letter-spacing:-0.075px;">No effect</span>
<svg style="position:absolute;left:102px;top:667px" width="59" height="59" viewBox="0 0 59 59" font-family="Liberation Sans, sans-serif"><rect x="0" y="0" width="59" height="59" rx="5.500" fill="#a9a9a9"/><rect x="15.3" y="14.3" width="29.5" height="22.5" fill="#808080" stroke="#000" stroke-width="1.3"/><path d="M15.3 14.3 L44.8 36.8 M44.8 14.3 L15.3 36.8" stroke="#000" stroke-width="1" fill="none"/><text x="30.200" y="11.300" font-size="8" font-weight="bold" text-anchor="middle" fill="#161624" stroke="#161624" stroke-width="0.300" textLength="14.7" lengthAdjust="spacingAndGlyphs">XXX</text><text x="30.200" y="53.800" font-size="16" text-anchor="middle" fill="#161624">7-4</text><text transform="translate(11.300,24) rotate(-90)" font-size="8.600" font-weight="bold" text-anchor="middle" fill="#161624" stroke="#161624" stroke-width="0.250" textLength="19" lengthAdjust="spacingAndGlyphs">X Inf</text></svg>
<div style="position:absolute;left:103.2px;top:660px;width:7px;height:7px;background:#000"><div style="position:absolute;left:1.200px;top:1.200px;width:4.600px;height:4.600px;border-radius:1.200px;transform:rotate(45deg);background:#10a080"></div></div>
<div style="position:absolute;left:95px;top:668px;width:7px;height:7px;background:#000"><div style="position:absolute;left:1.200px;top:1.200px;width:4.600px;height:4.600px;border-radius:1.200px;transform:rotate(45deg);background:#e87818"></div></div>
<span style="position:absolute;left:102.4px;top:728.00px;font-size:13px;line-height:13px;white-space:pre;color:#101020;letter-spacing:-0.075px;">No effect</span>
<svg style="position:absolute;left:169px;top:667px" width="59" height="59" viewBox="0 0 59 59" font-family="Liberation Sans, sans-serif"><rect x="0" y="0" width="59" height="59" rx="5.500" fill="#a9a9a9"/><rect x="15.3" y="14.3" width="29.5" height="22.5" fill="#e8e8e8" stroke="#000" stroke-width="1.3"/><path d="M23.1667 29.463 V21.637 H36.9333 V29.463 M30.05 21.637 V29.463" stroke="#000" stroke-width="1.3" fill="none"/><text x="30.200" y="11.300" font-size="8" font-weight="bold" text-anchor="middle" fill="#161624" stroke="#161624" stroke-width="0.300" textLength="9.8" lengthAdjust="spacingAndGlyphs">XX</text><text x="30.200" y="53.800" font-size="16" text-anchor="middle" fill="#161624">1-4</text><text transform="translate(11.300,24) rotate(-90)" font-size="8.600" font-weight="bold" text-anchor="middle" fill="#161624" stroke="#161624" stroke-width="0.250" textLength="27.7" lengthAdjust="spacingAndGlyphs">1st Eng</text></svg>
<div style="position:absolute;left:170.2px;top:660px;width:7px;height:7px;background:#000"><div style="position:absolute;left:1.200px;top:1.200px;width:4.600px;height:4.600px;border-radius:1.200px;transform:rotate(45deg);background:#10a080"></div></div>
<div style="position:absolute;left:162px;top:668px;width:7px;height:7px;background:#000"><div style="position:absolute;left:1.200px;top:1.200px;width:4.600px;height:4.600px;border-radius:1.200px;transform:rotate(45deg);background:#e87818"></div></div>
<span style="position:absolute;left:169.4px;top:728.00px;font-size:13px;line-height:13px;white-space:pre;color:#101020;letter-spacing:-0.075px;">No effect</span>
<svg style="position:absolute;left:236px;top:667px" width="59" height="59" viewBox="0 0 59 59" font-family="Liberation Sans, sans-serif"><rect x="0" y="0" width="59" height="59" rx="5.500" fill="#a9a9a9"/><rect x="15.3" y="14.3" width="29.5" height="22.5" fill="#fff" stroke="#000" stroke-width="1.3"/><path d="M15.3 14.3 L44.8 36.8 M44.8 14.3 L15.3 36.8" stroke="#000" stroke-width="1" fill="none"/><text x="30.200" y="11.300" font-size="8" font-weight="bold" text-anchor="middle" fill="#fff" stroke="#fff" stroke-width="0.300" textLength="14.7" lengthAdjust="spacingAndGlyphs">XXX</text><text x="30.200" y="53.800" font-size="16" text-anchor="middle" fill="#fff">7-3</text><text transform="translate(11.300,24) rotate(-90)" font-size="8.600" font-weight="bold" text-anchor="middle" fill="#fff" stroke="#fff" stroke-width="0.250" textLength="22" lengthAdjust="spacingAndGlyphs">VI Inf</text></svg>
<div style="position:absolute;left:237.2px;top:660px;width:7px;height:7px;background:#000"><div style="position:absolute;left:1.200px;top:1.200px;width:4.600px;height:4.600px;border-radius:1.200px;transform:rotate(45deg);background:#10a080"></div></div>
<div style="position:absolute;left:229px;top:668px;width:7px;height:7px;background:#000"><div style="position:absolute;left:1.200px;top:1.200px;width:4.600px;height:4.600px;border-radius:1.200px;transform:rotate(45deg);background:#e87818"></div></div>
<span style="position:absolute;left:236.4px;top:728.00px;font-size:13px;line-height:13px;white-space:pre;color:#101020;letter-spacing:-0.075px;">No effect</span>
<svg style="position:absolute;left:303px;top:667px" width="59" height="59" viewBox="0 0 59 59" font-family="Liberation Sans, sans-serif"><rect x="0" y="0" width="59" height="59" rx="5.500" fill="#a9a9a9"/><rect x="15.3" y="14.3" width="29.5" height="22.5" fill="#fff" stroke="#000" stroke-width="1.3"/><path d="M15.3 14.3 L44.8 36.8 M44.8 14.3 L15.3 36.8" stroke="#000" stroke-width="1" fill="none"/><text x="30.200" y="11.300" font-size="8" font-weight="bold" text-anchor="middle" fill="#fff" stroke="#fff" stroke-width="0.300" textLength="24.5" lengthAdjust="spacingAndGlyphs">XXXXX</text><text x="30.200" y="53.800" font-size="16" text-anchor="middle" fill="#fff">7(3)3</text><text transform="translate(11.300,25.75) rotate(-90)" font-size="8.600" font-weight="bold" text-anchor="middle" fill="#fff" stroke="#fff" stroke-width="0.250" textLength="37.5" lengthAdjust="spacingAndGlyphs">von Bock</text></svg>
<div style="position:absolute;left:304.2px;top:660px;width:7px;height:7px;background:#000"><div style="position:absolute;left:1.200px;top:1.200px;width:4.600px;height:4.600px;border-radius:1.200px;transform:rotate(45deg);background:#10a080"></div></div>
<div style="position:absolute;left:296px;top:668px;width:7px;height:7px;background:#000"><div style="position:absolute;left:1.200px;top:1.200px;width:4.600px;height:4.600px;border-radius:1.200px;transform:rotate(45deg);background:#e87818"></div></div>
<div style="position:absolute;left:336px;top:660px;width:7px;height:7px;background:#000"><div style="position:absolute;left:1.200px;top:1.200px;width:4.600px;height:4.600px;border-radius:1.200px;transform:rotate(45deg);background:#10a080"></div></div>
<span style="position:absolute;left:303.4px;top:728.00px;font-size:13px;line-height:13px;white-space:pre;color:#101020;letter-spacing:-0.075px;">No effect</span>
<svg style="position:absolute;left:370px;top:667px" width="59" height="59" viewBox="0 0 59 59" font-family="Liberation Sans, sans-serif"><rect x="0" y="0" width="59" height="59" rx="5.500" fill="#a9a9a9"/><rect x="15.3" y="14.3" width="29.5" height="22.5" fill="#dce8ff" stroke="#000" stroke-width="1.3"/><path d="M26.7067 25.55 l3.34333 -3.34333 l3.34333 3.34333 l-3.34333 3.34333 Z" fill="#000"/><text x="30.200" y="11.300" font-size="8" font-weight="bold" text-anchor="middle" fill="#161624" stroke="#161624" stroke-width="0.300" textLength="9.8" lengthAdjust="spacingAndGlyphs">XX</text><circle cx="24" cy="48" r="8" fill="#787878"/><text x="30.200" y="53.800" font-size="16" text-anchor="middle" fill="#161624"><tspan fill="#f0f0f0">3</tspan>-3</text><text transform="translate(11.300,24) rotate(-90)" font-size="8.600" font-weight="bold" text-anchor="middle" fill="#161624" stroke="#161624" stroke-width="0.250" textLength="31.7" lengthAdjust="spacingAndGlyphs">105 mm</text></svg>
<div style="position:absolute;left:371.2px;top:660px;width:7px;height:7px;background:#000"><div style="position:absolute;left:1.200px;top:1.200px;width:4.600px;height:4.600px;border-radius:1.200px;transform:rotate(45deg);background:#10a080"></div></div>
<div style="position:absolute;left:363px;top:668px;width:7px;height:7px;background:#000"><div style="position:absolute;left:1.200px;top:1.200px;width:4.600px;height:4.600px;border-radius:1.200px;transform:rotate(45deg);background:#e87818"></div></div>
<span style="position:absolute;left:370.4px;top:728.00px;font-size:13px;line-height:13px;white-space:pre;color:#101020;letter-spacing:-0.075px;">No effect</span>
<svg style="position:absolute;left:437px;top:667px" width="59" height="59" viewBox="0 0 59 59" font-family="Liberation Sans, sans-serif"><rect x="0" y="0" width="59" height="59" rx="5.500" fill="#a9a9a9"/><rect x="15.3" y="14.3" width="29.5" height="22.5" fill="#fff" stroke="#000" stroke-width="1.3"/><path d="M15.3 14.3 L44.8 36.8 M44.8 14.3 L15.3 36.8" stroke="#000" stroke-width="1" fill="none"/><text x="30.200" y="11.300" font-size="8" font-weight="bold" text-anchor="middle" fill="#fff" stroke="#fff" stroke-width="0.300" textLength="14.7" lengthAdjust="spacingAndGlyphs">XXX</text><text x="30.200" y="53.800" font-size="16" text-anchor="middle" fill="#fff">7-3</text><text transform="translate(11.300,24) rotate(-90)" font-size="8.600" font-weight="bold" text-anchor="middle" fill="#fff" stroke="#fff" stroke-width="0.250" textLength="31.7" lengthAdjust="spacingAndGlyphs">XVII Inf</text></svg>
<div style="position:absolute;left:438.2px;top:660px;width:7px;height:7px;background:#000"><div style="position:absolute;left:1.200px;top:1.200px;width:4.600px;height:4.600px;border-radius:1.200px;transform:rotate(45deg);background:#10a080"></div></div>
<div style="position:absolute;left:430px;top:668px;width:7px;height:7px;background:#000"><div style="position:absolute;left:1.200px;top:1.200px;width:4.600px;height:4.600px;border-radius:1.200px;transform:rotate(45deg);background:#e87818"></div></div>
<span style="position:absolute;left:437.4px;top:728.00px;font-size:13px;line-height:13px;white-space:pre;color:#101020;letter-spacing:-0.075px;">No effect</span>
<svg style="position:absolute;left:504px;top:667px" width="59" height="59" viewBox="0 0 59 59" font-family="Liberation Sans, sans-serif"><rect x="0" y="0" width="59" height="59" rx="5.500" fill="#a9a9a9"/><rect x="15.3" y="14.3" width="29.5" height="22.5" fill="#fff" stroke="#000" stroke-width="1.3"/><path d="M15.3 14.3 L44.8 36.8 M44.8 14.3 L15.3 36.8" stroke="#000" stroke-width="1" fill="none"/><text x="30.200" y="11.300" font-size="8" font-weight="bold" text-anchor="middle" fill="#fff" stroke="#fff" stroke-width="0.300" textLength="14.7" lengthAdjust="spacingAndGlyphs">XXX</text><text x="30.200" y="53.800" font-size="16" text-anchor="middle" fill="#fff">7-4</text><text transform="translate(11.300,24.3) rotate(-90)" font-size="8.600" font-weight="bold" text-anchor="middle" fill="#fff" stroke="#fff" stroke-width="0.250" textLength="34.6" lengthAdjust="spacingAndGlyphs">XLIII Inf</text></svg>
<div style="position:absolute;left:505.2px;top:660px;width:7px;height:7px;background:#000"><div style="position:absolute;left:1.200px;top:1.200px;width:4.600px;height:4.600px;border-radius:1.200px;transform:rotate(45deg);background:#10a080"></div></div>
<div style="position:absolute;left:497px;top:668px;width:7px;height:7px;background:#000"><div style="position:absolute;left:1.200px;top:1.200px;width:4.600px;height:4.600px;border-radius:1.200px;transform:rotate(45deg);background:#e87818"></div></div>
<span style="position:absolute;left:504.4px;top:728.00px;font-size:13px;line-height:13px;white-space:pre;color:#101020;letter-spacing:-0.075px;">No effect</span>
<svg style="position:absolute;left:571px;top:667px" width="59" height="59" viewBox="0 0 59 59" font-family="Liberation Sans, sans-serif"><rect x="0" y="0" width="59" height="59" rx="5.500" fill="#a9a9a9"/><rect x="17.3" y="14.3" width="25.5" height="16.2" fill="#d4d4d4" stroke="#000" stroke-width="1.3"/><path d="M17.3 14.3 L42.8 30.5 M42.8 14.3 L17.3 30.5" stroke="#000" stroke-width="1" fill="none"/><path d="M24.15 31.3 l2.4 2.4 l-2.4 2.4 l-2.4 -2.4 Z" fill="#000"/><path d="M35.95 31.3 l2.4 2.4 l-2.4 2.4 l-2.4 -2.4 Z" fill="#000"/><text x="30.200" y="11.300" font-size="8" font-weight="bold" text-anchor="middle" fill="#161624" stroke="#161624" stroke-width="0.300" textLength="9.8" lengthAdjust="spacingAndGlyphs">XX</text><text x="30.200" y="53.800" font-size="16" text-anchor="middle" fill="#161624">2-5</text><text transform="translate(11.300,29) rotate(-90)" font-size="8.600" font-weight="bold" text-anchor="middle" fill="#161624" stroke="#161624" stroke-width="0.250" textLength="44" lengthAdjust="spacingAndGlyphs">1st Mot Div</text></svg>
<div style="position:absolute;left:572.2px;top:660px;width:7px;height:7px;background:#000"><div style="position:absolute;left:1.200px;top:1.200px;width:4.600px;height:4.600px;border-radius:1.200px;transform:rotate(45deg);background:#10a080"></div></div>
<div style="position:absolute;left:564px;top:668px;width:7px;height:7px;background:#000"><div style="position:absolute;left:1.200px;top:1.200px;width:4.600px;height:4.600px;border-radius:1.200px;transform:rotate(45deg);background:#e87818"></div></div>
<span style="position:absolute;left:571.4px;top:728.00px;font-size:13px;line-height:13px;white-space:pre;color:#101020;letter-spacing:-0.075px;">No effect</span>
<svg style="position:absolute;left:638px;top:667px" width="59" height="59" viewBox="0 0 59 59" font-family="Liberation Sans, sans-serif"><rect x="0" y="0" width="59" height="59" rx="5.500" fill="#a9a9a9"/><rect x="15.3" y="14.3" width="29.5" height="22.5" fill="#808080" stroke="#000" stroke-width="1.3"/><path d="M15.3 14.3 L44.8 36.8 M44.8 14.3 L15.3 36.8" stroke="#000" stroke-width="1" fill="none"/><rect x="20.315" y="18.8" width="19.47" height="13.5" rx="4.95" fill="none" stroke="#000" stroke-width="1.2"/><text x="30.200" y="11.300" font-size="8" font-weight="bold" text-anchor="middle" fill="#161624" stroke="#161624" stroke-width="0.300" textLength="14.7" lengthAdjust="spacingAndGlyphs">XXX</text><text x="30.200" y="53.800" font-size="16" text-anchor="middle" fill="#161624">6-6</text><text transform="translate(11.300,24) rotate(-90)" font-size="8.600" font-weight="bold" text-anchor="middle" fill="#161624" stroke="#161624" stroke-width="0.250" textLength="34" lengthAdjust="spacingAndGlyphs">LII Mech</text></svg>
<div style="position:absolute;left:639.2px;top:660px;width:7px;height:7px;background:#000"><div style="position:absolute;left:1.200px;top:1.200px;width:4.600px;height:4.600px;border-radius:1.200px;transform:rotate(45deg);background:#10a080"></div></div>
<div style="position:absolute;left:631px;top:668px;width:7px;height:7px;background:#000"><div style="position:absolute;left:1.200px;top:1.200px;width:4.600px;height:4.600px;border-radius:1.200px;transform:rotate(45deg);background:#e87818"></div></div>
<span style="position:absolute;left:638.4px;top:728.00px;font-size:13px;line-height:13px;white-space:pre;color:#101020;letter-spacing:-0.075px;">No effect</span>
<svg style="position:absolute;left:705px;top:667px" width="59" height="59" viewBox="0 0 59 59" font-family="Liberation Sans, sans-serif"><rect x="0" y="0" width="59" height="59" rx="5.500" fill="#a9a9a9"/><rect x="15.3" y="14.3" width="29.5" height="22.5" fill="#fff" stroke="#000" stroke-width="1.3"/><path d="M15.3 14.3 L44.8 36.8 M44.8 14.3 L15.3 36.8" stroke="#000" stroke-width="1" fill="none"/><text x="30.200" y="11.300" font-size="8" font-weight="bold" text-anchor="middle" fill="#fff" stroke="#fff" stroke-width="0.300" textLength="14.7" lengthAdjust="spacingAndGlyphs">XXX</text><text x="30.200" y="53.800" font-size="16" text-anchor="middle" fill="#fff">6-4</text><text transform="translate(11.300,24) rotate(-90)" font-size="8.600" font-weight="bold" text-anchor="middle" fill="#fff" stroke="#fff" stroke-width="0.250" textLength="30" lengthAdjust="spacingAndGlyphs">LXXI Inf</text></svg>
<div style="position:absolute;left:706.2px;top:660px;width:7px;height:7px;background:#000"><div style="position:absolute;left:1.200px;top:1.200px;width:4.600px;height:4.600px;border-radius:1.200px;transform:rotate(45deg);background:#10a080"></div></div>
<div style="position:absolute;left:698px;top:668px;width:7px;height:7px;background:#000"><div style="position:absolute;left:1.200px;top:1.200px;width:4.600px;height:4.600px;border-radius:1.200px;transform:rotate(45deg);background:#e87818"></div></div>
<span style="position:absolute;left:705.4px;top:728.00px;font-size:13px;line-height:13px;white-space:pre;color:#101020;letter-spacing:-0.075px;">No effect</span>
<svg style="position:absolute;left:772px;top:667px" width="59" height="59" viewBox="0 0 59 59" font-family="Liberation Sans, sans-serif"><rect x="0" y="0" width="59" height="59" rx="5.500" fill="#a9a9a9"/><rect x="15.3" y="14.3" width="29.5" height="22.5" fill="#fff" stroke="#000" stroke-width="1.3"/><path d="M15.3 14.3 L44.8 36.8 M44.8 14.3 L15.3 36.8" stroke="#000" stroke-width="1" fill="none"/><path d="M25.035 36.8 L30.05 26.675 L35.065 36.8 Z" fill="#000"/><text x="30.200" y="11.300" font-size="8" font-weight="bold" text-anchor="middle" fill="#fff" stroke="#fff" stroke-width="0.300" textLength="14.7" lengthAdjust="spacingAndGlyphs">XXX</text><text x="30.200" y="53.800" font-size="16" text-anchor="middle" fill="#fff">6-4</text><text transform="translate(11.300,28.5) rotate(-90)" font-size="8.600" font-weight="bold" text-anchor="middle" fill="#fff" stroke="#fff" stroke-width="0.250" textLength="43" lengthAdjust="spacingAndGlyphs">XLIX Mtn</text></svg>
<div style="position:absolute;left:773.2px;top:660px;width:7px;height:7px;background:#000"><div style="position:absolute;left:1.200px;top:1.200px;width:4.600px;height:4.600px;border-radius:1.200px;transform:rotate(45deg);background:#10a080"></div></div>
<div style="position:absolute;left:765px;top:668px;width:7px;height:7px;background:#000"><div style="position:absolute;left:1.200px;top:1.200px;width:4.600px;height:4.600px;border-radius:1.200px;transform:rotate(45deg);background:#e87818"></div></div>
<span style="position:absolute;left:772.4px;top:728.00px;font-size:13px;line-height:13px;white-space:pre;color:#101020;letter-spacing:-0.075px;">No effect</span>
<svg style="position:absolute;left:726px;top:73px" width="280" height="262" viewBox="0 0 280 262" font-family="Liberation Sans, sans-serif"><defs>
<filter id="mt" x="0" y="0" width="100%" height="100%" color-interpolation-filters="sRGB"><feTurbulence type="fractalNoise" baseFrequency="0.07 0.05" numOctaves="3" seed="3"/><feColorMatrix type="matrix" values="0.4 0 0 0 0.55  0.34 0 0 0 0.62  0.45 0 0 0 0.3  0 0 0 0 1"/></filter>
<filter id="ft" x="0" y="0" width="100%" height="100%" color-interpolation-filters="sRGB"><feTurbulence type="fractalNoise" baseFrequency="0.16" numOctaves="3" seed="5"/><feColorMatrix type="matrix" values="0.5 0 0 0 0.2  0.42 0 0 0 0.42  0.4 0 0 0 0.1  0 0 0 0 1"/></filter>
<clipPath id="fc"><path d="M34.5 1.3 L68.5 18.5 L68.5 58.5 L34.5 75.7 L0.5 58.5 L0.5 18.5 Z"/><path d="M170.5 1.3 L204.5 18.5 L204.5 58.5 L170.5 75.7 L136.5 58.5 L136.5 18.5 Z"/><path d="M204.5 58.5 L238.5 75.7 L238.5 115.7 L204.5 132.8 L170.5 115.7 L170.5 75.7 Z"/><path d="M306.5 115.7 L340.5 132.8 L340.5 172.8 L306.5 189.9 L272.5 172.8 L272.5 132.8 Z"/><path d="M34.5 230.0 L68.5 247.1 L68.5 287.1 L34.5 304.2 L0.5 287.1 L0.5 247.1 Z"/></clipPath></defs><rect width="280" height="262" fill="#c4cf8c"/><rect width="280" height="262" filter="url(#mt)"/><path d="M179 7h5v5h-5zM62 193h3v9h-3zM9 25h4v3h-4zM157 188h6v5h-6zM126 73h3v5h-3zM195 89h4v5h-4zM268 88h3v9h-3zM27 222h5v3h-5zM204 140h6v3h-6zM155 217h5v5h-5zM197 12h4v7h-4zM276 224h3v9h-3zM78 167h5v5h-5zM104 55h5v3h-5zM171 45h4v5h-4zM129 71h4v7h-4zM236 203h4v3h-4zM225 105h3v5h-3zM256 149h5v5h-5zM184 104h6v5h-6zM74 65h5v9h-5zM251 105h4v5h-4zM143 24h3v3h-3zM43 42h6v3h-6zM108 156h6v7h-6zM272 226h3v3h-3zM191 141h5v7h-5zM31 114h6v3h-6zM267 229h5v5h-5zM142 28h5v5h-5zM43 200h3v7h-3zM137 29h5v7h-5zM67 63h3v3h-3zM205 214h4v5h-4zM185 248h4v7h-4zM148 159h4v5h-4zM200 105h5v9h-5zM252 118h4v5h-4zM18 6h4v5h-4zM2 185h3v5h-3zM19 8h5v3h-5zM144 73h6v5h-6zM151 190h6v5h-6zM220 212h4v3h-4zM27 113h6v9h-6zM131 191h3v3h-3zM113 89h3v5h-3zM54 141h4v9h-4zM51 121h3v9h-3zM226 224h3v3h-3zM183 142h3v3h-3zM259 222h4v9h-4zM136 56h6v3h-6zM46 1h6v7h-6zM259 206h5v9h-5zM195 191h6v5h-6zM53 57h3v3h-3zM209 15h6v5h-6zM16 133h4v3h-4zM167 177h4v9h-4zM34 233h4v3h-4zM173 110h5v7h-5zM57 188h4v7h-4zM111 176h5v9h-5zM89 197h3v3h-3zM128 262h3v3h-3zM151 133h4v7h-4zM247 230h5v7h-5zM44 218h5v3h-5zM187 145h3v5h-3zM74 233h4v7h-4zM79 55h5v5h-5zM192 223h6v7h-6zM253 222h3v9h-3zM232 12h5v5h-5zM178 69h6v9h-6zM157 29h4v3h-4zM234 153h4v9h-4zM36 81h3v7h-3zM59 65h3v7h-3zM218 232h6v5h-6zM259 62h4v5h-4zM247 6h5v9h-5zM225 226h4v7h-4zM45 184h6v3h-6zM240 58h6v7h-6zM85 208h4v5h-4zM7 51h5v7h-5zM242 253h5v7h-5zM180 105h5v3h-5zM32 254h4v7h-4zM11 156h5v7h-5zM122 258h3v9h-3zM252 50h3v9h-3zM0 243h4v7h-4zM121 249h5v7h-5zM186 33h5v7h-5zM187 85h5v5h-5zM54 174h6v5h-6zM172 79h3v7h-3zM80 113h5v9h-5zM124 177h6v5h-6zM184 74h5v3h-5zM229 197h5v5h-5zM226 39h3v5h-3zM276 160h3v9h-3zM116 165h4v9h-4zM138 64h3v3h-3zM218 57h6v3h-6zM156 240h3v9h-3zM37 122h5v9h-5zM172 188h6v9h-6zM251 195h6v9h-6zM73 65h5v9h-5zM175 72h3v7h-3zM66 88h3v5h-3zM42 100h4v5h-4zM18 107h6v9h-6zM17 218h6v3h-6zM240 201h6v9h-6zM2 92h6v9h-6zM151 192h4v9h-4zM61 114h3v9h-3zM94 178h6v5h-6zM235 241h3v9h-3zM166 174h3v9h-3zM38 121h3v7h-3zM106 55h5v7h-5zM213 99h6v7h-6zM234 123h3v7h-3z" fill="#a09840" opacity="0.3"/><g clip-path="url(#fc)"><rect width="280" height="262" fill="#5e8f3d"/><rect width="280" height="262" filter="url(#ft)"/></g><path d="M-101.5 -38.6 L-67.5 -55.8 L-33.5 -38.6 L-33.5 1.3 M-33.5 -38.6 L0.5 -55.8 L34.5 -38.6 L34.5 1.3 M34.5 -38.6 L68.5 -55.8 L102.5 -38.6 L102.5 1.3 M102.5 -38.6 L136.5 -55.8 L170.5 -38.6 L170.5 1.3 M170.5 -38.6 L204.5 -55.8 L238.5 -38.6 L238.5 1.3 M238.5 -38.6 L272.5 -55.8 L306.5 -38.6 L306.5 1.3 M306.5 -38.6 L340.5 -55.8 L374.5 -38.6 L374.5 1.3 M-67.5 18.5 L-33.5 1.3 L0.5 18.5 L0.5 58.5 M0.5 18.5 L34.5 1.3 L68.5 18.5 L68.5 58.5 M68.5 18.5 L102.5 1.3 L136.5 18.5 L136.5 58.5 M136.5 18.5 L170.5 1.3 L204.5 18.5 L204.5 58.5 M204.5 18.5 L238.5 1.3 L272.5 18.5 L272.5 58.5 M272.5 18.5 L306.5 1.3 L340.5 18.5 L340.5 58.5 M340.5 18.5 L374.5 1.3 L408.5 18.5 L408.5 58.5 M-101.5 75.7 L-67.5 58.5 L-33.5 75.7 L-33.5 115.7 M-33.5 75.7 L0.5 58.5 L34.5 75.7 L34.5 115.7 M34.5 75.7 L68.5 58.5 L102.5 75.7 L102.5 115.7 M102.5 75.7 L136.5 58.5 L170.5 75.7 L170.5 115.7 M170.5 75.7 L204.5 58.5 L238.5 75.7 L238.5 115.7 M238.5 75.7 L272.5 58.5 L306.5 75.7 L306.5 115.7 M306.5 75.7 L340.5 58.5 L374.5 75.7 L374.5 115.7 M-67.5 132.8 L-33.5 115.7 L0.5 132.8 L0.5 172.8 M0.5 132.8 L34.5 115.7 L68.5 132.8 L68.5 172.8 M68.5 132.8 L102.5 115.7 L136.5 132.8 L136.5 172.8 M136.5 132.8 L170.5 115.7 L204.5 132.8 L204.5 172.8 M204.5 132.8 L238.5 115.7 L272.5 132.8 L272.5 172.8 M272.5 132.8 L306.5 115.7 L340.5 132.8 L340.5 172.8 M340.5 132.8 L374.5 115.7 L408.5 132.8 L408.5 172.8 M-101.5 189.9 L-67.5 172.8 L-33.5 189.9 L-33.5 229.9 M-33.5 189.9 L0.5 172.8 L34.5 189.9 L34.5 229.9 M34.5 189.9 L68.5 172.8 L102.5 189.9 L102.5 229.9 M102.5 189.9 L136.5 172.8 L170.5 189.9 L170.5 229.9 M170.5 189.9 L204.5 172.8 L238.5 189.9 L238.5 229.9 M238.5 189.9 L272.5 172.8 L306.5 189.9 L306.5 229.9 M306.5 189.9 L340.5 172.8 L374.5 189.9 L374.5 229.9 M-67.5 247.1 L-33.5 230.0 L0.5 247.1 L0.5 287.1 M0.5 247.1 L34.5 230.0 L68.5 247.1 L68.5 287.1 M68.5 247.1 L102.5 230.0 L136.5 247.1 L136.5 287.1 M136.5 247.1 L170.5 230.0 L204.5 247.1 L204.5 287.1 M204.5 247.1 L238.5 230.0 L272.5 247.1 L272.5 287.1 M272.5 247.1 L306.5 230.0 L340.5 247.1 L340.5 287.1 M340.5 247.1 L374.5 230.0 L408.5 247.1 L408.5 287.1" stroke="#1c2410" stroke-width="0.9" fill="none" opacity="0.85"/><path d="M86.0 0.0 C84.8 1.2 82.3 3.8 79.0 7.0 C75.7 10.2 69.1 15.0 66.0 19.0 C62.9 23.0 61.3 27.0 60.5 31.0 C59.7 35.0 60.0 38.9 61.0 43.0 C62.0 47.1 64.3 51.8 66.5 55.5 C68.7 59.2 71.3 62.1 74.0 65.0 C76.7 67.9 79.3 70.6 82.6 72.8 C85.9 75.0 90.6 76.5 94.0 78.0 C97.4 79.5 100.5 79.5 103.0 81.6 C105.5 83.7 108.3 87.4 108.8 90.3 C109.3 93.2 106.7 96.4 106.0 99.0 C105.3 101.6 104.5 103.7 104.5 106.0 C104.5 108.3 105.3 110.8 106.0 113.0 C106.7 115.2 107.5 117.2 108.8 119.0 C110.1 120.8 112.3 122.6 114.0 124.0 C115.7 125.4 116.8 126.5 119.0 127.6 C121.2 128.7 124.1 129.8 127.0 130.5 C129.9 131.2 132.0 131.6 136.5 132.0 C141.0 132.4 148.4 133.3 154.0 133.0 C159.6 132.7 165.0 131.7 170.0 130.0 C175.0 128.3 179.7 124.7 184.0 123.0 C188.3 121.3 192.7 120.0 196.0 120.0 C199.3 120.0 202.0 122.0 204.0 123.0 C206.0 124.0 207.3 125.5 208.0 126.0" stroke="#3c78b4" stroke-width="2.4" fill="none" stroke-linecap="round"/><path d="M199.0 159.0 C198.8 160.3 197.9 164.2 198.0 167.0 C198.1 169.8 198.6 173.4 199.4 175.7 C200.2 178.0 201.6 179.5 203.0 181.0 C204.4 182.5 206.2 183.8 208.0 184.5 C209.8 185.2 212.0 185.5 214.0 185.5 C216.0 185.5 219.0 184.7 220.0 184.5" stroke="#3c78b4" stroke-width="2.4" fill="none" stroke-linecap="round"/><path d="M280.0 179.5 C278.3 179.6 273.2 179.5 270.0 179.8 C266.8 180.2 263.7 180.6 260.7 181.6 C257.7 182.6 254.5 184.5 252.0 186.0 C249.5 187.5 248.2 189.4 246.0 190.5 C243.8 191.6 241.4 192.1 239.0 192.5 C236.6 192.9 232.7 190.6 231.5 193.0 C230.3 195.4 231.8 201.4 232.0 207.0 C232.2 212.6 232.5 221.7 233.0 226.4 C233.5 231.1 235.2 232.3 235.0 235.0 C234.8 237.7 233.3 240.5 231.5 242.5 C229.7 244.5 226.4 245.8 224.0 247.0 C221.6 248.2 219.2 248.5 217.0 249.7 C214.8 250.9 212.5 252.5 211.0 254.0 C209.5 255.5 208.8 257.0 208.0 258.5 C207.2 260.0 206.3 262.2 206.0 263.0" stroke="#3c78b4" stroke-width="2.4" fill="none" stroke-linecap="round"/><path d="M231.5 193.0 C229.6 193.0 222.9 193.0 220.0 193.0 C217.1 193.0 215.0 193.0 214.0 193.0" stroke="#3c78b4" stroke-width="2.4" fill="none" stroke-linecap="round"/><path d="M0.0 38.0 L34.5 38.5" stroke="#8c8c84" stroke-width="3.2" fill="none"/><path d="M34.5 38.5 L49.0 24.0 L62.0 10.0 L72.0 0.0" stroke="#8c8c84" stroke-width="3.2" fill="none"/><path d="M34.5 38.5 L46.0 58.0 L57.0 77.0 L68.0 96.0" stroke="#8c8c84" stroke-width="3.2" fill="none"/><path d="M0.0 108.0 L25.7 103.8 L68.0 96.0" stroke="#8c8c84" stroke-width="3.2" fill="none"/><path d="M68.0 96.0 L77.0 81.0 L85.5 67.0" stroke="#8c8c84" stroke-width="3.2" fill="none"/><path d="M68.0 96.0 L62.0 111.0 L56.3 126.0 L52.0 151.5 L51.0 177.0 L50.5 209.0 L50.5 237.0" stroke="#8c8c84" stroke-width="3.2" fill="none"/><path d="M68.0 96.0 L74.0 111.0 L80.0 126.0 L86.0 137.0" stroke="#8c8c84" stroke-width="3.2" fill="none"/><path d="M0.0 146.5 L26.0 149.0 L52.0 151.7 L64.0 156.0 L76.8 161.0" stroke="#8c8c84" stroke-width="3.2" fill="none"/><path d="M127.8 161.0 L138.0 156.8 L146.0 154.0" stroke="#8c8c84" stroke-width="3.2" fill="none"/><path d="M127.8 33.5 L140.0 31.5 L152.0 29.8" stroke="#8c8c84" stroke-width="3.2" fill="none"/><path d="M195.0 30.0 L204.0 28.0" stroke="#8c8c84" stroke-width="3.2" fill="none"/><path d="M231.5 103.5 L254.0 99.0 L275.0 94.7 L280.0 87.4" stroke="#8c8c84" stroke-width="3.2" fill="none"/><path d="M254.0 99.0 L280.0 97.0" stroke="#8c8c84" stroke-width="3.2" fill="none"/><path d="M263.0 156.5 L280.0 161.0" stroke="#8c8c84" stroke-width="3.2" fill="none"/><path d="M231.5 200.0 L252.0 204.5 L270.9 209.0 L280.0 208.0" stroke="#8c8c84" stroke-width="3.2" fill="none"/><path d="M270.9 209.0 L275.0 215.0 L280.0 222.0" stroke="#8c8c84" stroke-width="3.2" fill="none"/><path d="M126.5 234.0 L124.0 247.0 L122.0 261.0" stroke="#8c8c84" stroke-width="3.2" fill="none"/><path d="M170.0 189.0 L179.0 195.0" stroke="#8c8c84" stroke-width="3.2" fill="none"/><path d="M0.0 38.0 L34.5 38.5" stroke="#f4f4c4" stroke-width="1.5" stroke-dasharray="2.2 2" fill="none"/><path d="M34.5 38.5 L49.0 24.0 L62.0 10.0 L72.0 0.0" stroke="#f4f4c4" stroke-width="1.5" stroke-dasharray="2.2 2" fill="none"/><path d="M34.5 38.5 L46.0 58.0 L57.0 77.0 L68.0 96.0" stroke="#f4f4c4" stroke-width="1.5" stroke-dasharray="2.2 2" fill="none"/><path d="M0.0 108.0 L25.7 103.8 L68.0 96.0" stroke="#f4f4c4" stroke-width="1.5" stroke-dasharray="2.2 2" fill="none"/><path d="M68.0 96.0 L77.0 81.0 L85.5 67.0" stroke="#f4f4c4" stroke-width="1.5" stroke-dasharray="2.2 2" fill="none"/><path d="M68.0 96.0 L62.0 111.0 L56.3 126.0 L52.0 151.5 L51.0 177.0 L50.5 209.0 L50.5 237.0" stroke="#f4f4c4" stroke-width="1.5" stroke-dasharray="2.2 2" fill="none"/><path d="M68.0 96.0 L74.0 111.0 L80.0 126.0 L86.0 137.0" stroke="#f4f4c4" stroke-width="1.5" stroke-dasharray="2.2 2" fill="none"/><path d="M0.0 146.5 L26.0 149.0 L52.0 151.7 L64.0 156.0 L76.8 161.0" stroke="#f4f4c4" stroke-width="1.5" stroke-dasharray="2.2 2" fill="none"/><path d="M127.8 161.0 L138.0 156.8 L146.0 154.0" stroke="#f4f4c4" stroke-width="1.5" stroke-dasharray="2.2 2" fill="none"/><path d="M127.8 33.5 L140.0 31.5 L152.0 29.8" stroke="#f4f4c4" stroke-width="1.5" stroke-dasharray="2.2 2" fill="none"/><path d="M195.0 30.0 L204.0 28.0" stroke="#f4f4c4" stroke-width="1.5" stroke-dasharray="2.2 2" fill="none"/><path d="M231.5 103.5 L254.0 99.0 L275.0 94.7 L280.0 87.4" stroke="#f4f4c4" stroke-width="1.5" stroke-dasharray="2.2 2" fill="none"/><path d="M254.0 99.0 L280.0 97.0" stroke="#f4f4c4" stroke-width="1.5" stroke-dasharray="2.2 2" fill="none"/><path d="M263.0 156.5 L280.0 161.0" stroke="#f4f4c4" stroke-width="1.5" stroke-dasharray="2.2 2" fill="none"/><path d="M231.5 200.0 L252.0 204.5 L270.9 209.0 L280.0 208.0" stroke="#f4f4c4" stroke-width="1.5" stroke-dasharray="2.2 2" fill="none"/><path d="M270.9 209.0 L275.0 215.0 L280.0 222.0" stroke="#f4f4c4" stroke-width="1.5" stroke-dasharray="2.2 2" fill="none"/><path d="M126.5 234.0 L124.0 247.0 L122.0 261.0" stroke="#f4f4c4" stroke-width="1.5" stroke-dasharray="2.2 2" fill="none"/><path d="M170.0 189.0 L179.0 195.0" stroke="#f4f4c4" stroke-width="1.5" stroke-dasharray="2.2 2" fill="none"/><path d="M102.5 1.3 L136.5 18.5 L170.5 1.3" stroke="#fbfbf4" stroke-width="2.6" fill="none" stroke-linejoin="round"/><path d="M170.5 75.7 L170.5 115.7 L204.5 132.8 L204.5 172.8 L170.5 189.9 L170.5 230.0 L204.5 247.1 L204.5 267.0" stroke="#fbfbf4" stroke-width="2.6" fill="none" stroke-linejoin="round"/><path d="M102.5 1.3 L96.0 -2.0" stroke="#fbfbf4" stroke-width="2.6" fill="none" stroke-linejoin="round"/><path d="M170.5 1.3 L176.0 -2.0" stroke="#fbfbf4" stroke-width="2.6" fill="none" stroke-linejoin="round"/><path d="M0.5 19.0 L34.5 1.3 L68.5 18.5 L68.5 58.5 L102.5 75.7 L136.5 58.5 L170.5 75.7 L204.5 58.5 L204.5 18.5 L238.5 1.3 L272.5 18.5 L306.5 1.3" stroke="#8c0808" stroke-width="3.9" fill="none" stroke-linejoin="round"/><path d="M204.5 58.5 L238.5 75.7 L238.5 115.7 L272.5 132.8 L272.5 172.8 L306.5 189.9" stroke="#8c0808" stroke-width="3.9" fill="none" stroke-linejoin="round"/><path d="M0.5 19.0 L0.5 59.0" stroke="#8c0808" stroke-width="3.9" fill="none" stroke-linejoin="round"/><path d="M0.5 245.0 L0.5 261.0" stroke="#8c0808" stroke-width="3.9" fill="none" stroke-linejoin="round"/><path d="M68.5 29.0 L68.5 49.0" stroke="#fbfbf4" stroke-width="1.8" fill="none"/><path d="M77.0 64.0 L96.0 73.5" stroke="#fbfbf4" stroke-width="2" fill="none"/><path d="M121.0 67.5 L130.0 63.0" stroke="#fbfbf4" stroke-width="2" fill="none"/><path d="M144.0 63.5 L160.0 71.5" stroke="#fbfbf4" stroke-width="2" fill="none"/><text x="6.5" y="6.5" font-size="17" font-weight="bold" fill="#0a0a0a" textLength="56" lengthAdjust="spacingAndGlyphs">Danzig</text><text x="152.0" y="113.0" font-size="17" fill="#1428d8" font-family="Liberation Serif, serif" font-weight="bold" font-style="italic">Vistula</text><text x="59.0" y="179.8" font-size="13.500" font-weight="bold" fill="#0a0a0a" textLength="34.500" lengthAdjust="spacingAndGlyphs">Lodz</text><text x="173.0" y="149.7" font-size="15.5" fill="#e02810" font-family="Liberation Serif, serif" font-weight="bold" font-style="italic" stroke="#fff" stroke-width="2.200" paint-order="stroke">Warsaw</text><text x="106.0" y="220.0" font-size="28.500" fill="#8c0c0c" font-weight="bold" font-style="italic" textLength="124" lengthAdjust="spacingAndGlyphs">POLAND</text><rect x="132.0" y="59.5" width="9" height="11" fill="#000"/><text x="136.5" y="68.8" font-size="10" font-weight="bold" fill="#f4f4f4" text-anchor="middle">3</text><rect x="200.0" y="59.5" width="9" height="11" fill="#000"/><text x="204.5" y="68.8" font-size="10" font-weight="bold" fill="#f4f4f4" text-anchor="middle">3</text><rect x="98.0" y="116.5" width="9" height="11" fill="#000"/><text x="102.5" y="125.8" font-size="10" font-weight="bold" fill="#f4f4f4" text-anchor="middle">2</text><rect x="166.0" y="116.5" width="9" height="11" fill="#000"/><text x="170.5" y="125.8" font-size="10" font-weight="bold" fill="#f4f4f4" text-anchor="middle">2</text><rect x="234.0" y="116.5" width="9" height="11" fill="#000"/><text x="238.5" y="125.8" font-size="10" font-weight="bold" fill="#f4f4f4" text-anchor="middle">3</text><rect x="-4.0" y="173.5" width="9" height="11" fill="#000"/><text x="0.5" y="182.8" font-size="10" font-weight="bold" fill="#f4f4f4" text-anchor="middle">2</text><rect x="132.0" y="173.5" width="9" height="11" fill="#000"/><text x="136.5" y="182.8" font-size="10" font-weight="bold" fill="#f4f4f4" text-anchor="middle">2</text><rect x="30.0" y="230.5" width="9" height="11" fill="#000"/><text x="34.5" y="239.8" font-size="10" font-weight="bold" fill="#f4f4f4" text-anchor="middle">3</text><rect x="87.5" y="6.5" width="7" height="7" fill="#000"/><circle cx="91.0" cy="10.0" r="2.9" fill="#f0a010"/><rect x="155.5" y="6.5" width="7" height="7" fill="#000"/><circle cx="159.0" cy="10.0" r="2.9" fill="#f0a010"/><rect x="113.5" y="63.5" width="7" height="7" fill="#000"/><circle cx="117.0" cy="67.0" r="2.9" fill="#10a080"/><rect x="181.5" y="63.5" width="7" height="7" fill="#000"/><circle cx="185.0" cy="67.0" r="2.9" fill="#10a080"/><rect x="213.5" y="63.5" width="7" height="7" fill="#000"/><circle cx="217.0" cy="67.0" r="2.9" fill="#10a080"/><rect x="104.0" y="71.5" width="7" height="7" fill="#000"/><circle cx="107.5" cy="75.0" r="2.9" fill="#e87818"/><rect x="172.0" y="71.5" width="7" height="7" fill="#000"/><circle cx="175.5" cy="75.0" r="2.9" fill="#e87818"/><rect x="150.5" y="121.5" width="7" height="7" fill="#000"/><circle cx="154.0" cy="125.0" r="2.9" fill="#f0a010"/><rect x="138.5" y="128.5" width="7" height="7" fill="#000"/><circle cx="142.0" cy="132.0" r="2.9" fill="#e87818"/><rect x="206.5" y="128.5" width="7" height="7" fill="#000"/><circle cx="210.0" cy="132.0" r="2.9" fill="#e87818"/><rect x="215.5" y="120.5" width="7" height="7" fill="#000"/><circle cx="219.0" cy="124.0" r="2.9" fill="#10a080"/><rect x="113.5" y="177.5" width="7" height="7" fill="#000"/><circle cx="117.0" cy="181.0" r="2.9" fill="#10a080"/><rect x="181.5" y="177.5" width="7" height="7" fill="#000"/><circle cx="185.0" cy="181.0" r="2.9" fill="#10a080"/><rect x="104.0" y="185.5" width="7" height="7" fill="#000"/><circle cx="107.5" cy="189.0" r="2.9" fill="#e87818"/><rect x="172.0" y="185.5" width="7" height="7" fill="#000"/><circle cx="175.5" cy="189.0" r="2.9" fill="#e87818"/><rect x="11.5" y="234.5" width="7" height="7" fill="#000"/><circle cx="15.0" cy="238.0" r="2.9" fill="#808080"/><g transform="translate(44.0,-42.6)"><rect x="1" y="1.500" width="49" height="48.500" rx="5" fill="#000"/><rect x="0" y="0" width="49" height="48" rx="5" fill="#fff"/><rect x="1" y="1" width="47" height="46" rx="4" fill="#000"/></g><g transform="translate(112.0,-42.6)"><rect x="1" y="1.500" width="49" height="48.500" rx="5" fill="#000"/><rect x="0" y="0" width="49" height="48" rx="5" fill="#fff"/><rect x="1" y="1" width="47" height="46" rx="4" fill="#adadad"/></g><g transform="translate(180.0,-42.6)"><rect x="1" y="1.500" width="49" height="48.500" rx="5" fill="#000"/><rect x="0" y="0" width="49" height="48" rx="5" fill="#fff"/><rect x="1" y="1" width="47" height="46" rx="4" fill="#adadad"/></g><circle cx="74.0" cy="-1.0" r="3" fill="none" stroke="#c81830" stroke-width="1.600"/><path d="M44.0 1.5 h18" stroke="#fff" stroke-width="1.500"/><text x="125.0" y="3.0" font-size="9" font-weight="bold" fill="#26262e">6-4</text><text x="193.0" y="3.0" font-size="9" font-weight="bold" fill="#26262e">6-4</text><path d="M140.5 153.0 l6.500 -8 h8 v16 h-8 Z" fill="none" stroke="#181800" stroke-width="5.600" stroke-linejoin="miter"/><path d="M140.5 153.0 l6.500 -8 h8 v16 h-8 Z" fill="none" stroke="#f8f018" stroke-width="3" stroke-linejoin="miter"/><g transform="translate(78.0,14.1)"><rect x="1" y="1.500" width="49" height="48.500" rx="5" fill="#000"/><rect x="0" y="0" width="49" height="48" rx="5" fill="#fff"/><rect x="1" y="1" width="47" height="46" rx="4" fill="#adadad"/><text x="2.500" y="13.500" font-size="12" fill="#26262e">5</text><text x="2" y="43.500" font-size="12" fill="#26262e">2</text><text x="25.500" y="9.500" font-size="6.800" font-weight="bold" text-anchor="middle" fill="#30303c">Bf 109</text><text x="25" y="15.500" font-size="5.800" font-weight="bold" text-anchor="middle" fill="#30303c">E-2</text><text x="3" y="31.800" font-size="6" font-weight="bold" fill="#30303c">Emil</text><text x="43.500" y="11" font-size="8" fill="#30303c">*</text><text x="43.500" y="42" font-size="8" fill="#30303c">*</text><circle cx="24.500" cy="39.500" r="6.500" fill="#f8f010"/><text x="24.500" y="43.600" font-size="11" text-anchor="middle" fill="#26262e">3</text><path d="M6 21 Q9 18.500 16 19.500 L30 19.500 Q40 19 46 20.500 Q47 22 45 23 L30 24 Q15 25 8 23 Z" fill="#6a7a30"/><path d="M8 21 L15 20 L16 23.500 L9 23 Z" fill="#e8b018"/><path d="M22 19 L27 18 L28 23 L23 23.500 Z" fill="#e8a818"/><path d="M30 20 L38 20 L38 23 L30 23.500 Z" fill="#58b8e8"/><path d="M17 20 L22 19.500 L22 23.500 L17 23.500 Z" fill="#e8e8e8"/><circle cx="43.500" cy="19.500" r="3.200" fill="#e8c020" stroke="#6a6a20" stroke-width="0.800"/><path d="M43.500 16 V25.500 M40 19.500 H47" stroke="#505020" stroke-width="0.800"/><path d="M22 16.500 H37" stroke="#50505a" stroke-width="0.600"/></g><g transform="translate(146.0,14.1)"><rect x="1" y="1.500" width="49" height="48.500" rx="5" fill="#000"/><rect x="0" y="0" width="49" height="48" rx="5" fill="#fff"/><rect x="1" y="1" width="47" height="46" rx="4" fill="#adadad"/><text x="2.500" y="13.500" font-size="12" fill="#26262e">5</text><text x="2" y="43.500" font-size="12" fill="#26262e">2</text><text x="25.500" y="9.500" font-size="6.800" font-weight="bold" text-anchor="middle" fill="#30303c">Bf 109</text><text x="25" y="15.500" font-size="5.800" font-weight="bold" text-anchor="middle" fill="#30303c">E-4</text><text x="3" y="31.800" font-size="6" font-weight="bold" fill="#30303c">Emil</text><text x="43.500" y="11" font-size="8" fill="#30303c">*</text><text x="43.500" y="42" font-size="8" fill="#30303c">*</text><circle cx="24.500" cy="39.500" r="6.500" fill="#f8f010"/><text x="24.500" y="43.600" font-size="11" text-anchor="middle" fill="#26262e">3</text><path d="M6 21 Q9 18.500 16 19.500 L30 19.500 Q40 19 46 20.500 Q47 22 45 23 L30 24 Q15 25 8 23 Z" fill="#6a7a30"/><path d="M8 21 L15 20 L16 23.500 L9 23 Z" fill="#e8b018"/><path d="M22 19 L27 18 L28 23 L23 23.500 Z" fill="#e8a818"/><path d="M30 20 L38 20 L38 23 L30 23.500 Z" fill="#58b8e8"/><path d="M17 20 L22 19.500 L22 23.500 L17 23.500 Z" fill="#e8e8e8"/><circle cx="43.500" cy="19.500" r="3.200" fill="#e8c020" stroke="#6a6a20" stroke-width="0.800"/><path d="M43.500 16 V25.500 M40 19.500 H47" stroke="#505020" stroke-width="0.800"/><path d="M22 16.500 H37" stroke="#50505a" stroke-width="0.600"/></g><g transform="translate(-24.0,71.2)"><rect x="1" y="1.500" width="49" height="48.500" rx="5" fill="#000"/><rect x="0" y="0" width="49" height="48" rx="5" fill="#fff"/><rect x="1" y="1" width="47" height="46" rx="4" fill="#adadad"/><rect x="13.5" y="11" width="23.5" height="18" fill="#808080" stroke="#000" stroke-width="1.17"/><path d="M13.5 11 L37 29 M37 11 L13.5 29" stroke="#000" stroke-width="0.9" fill="none"/><text x="25.200" y="8.800" font-size="7.500" font-weight="bold" text-anchor="middle" fill="#26262e" textLength="13.8" lengthAdjust="spacingAndGlyphs">XXX</text><text x="25.200" y="43.600" font-size="15" text-anchor="middle" fill="#26262e">7-4</text></g><g transform="translate(112.0,71.2)"><rect x="1" y="1.500" width="49" height="48.500" rx="5" fill="#000"/><rect x="0" y="0" width="49" height="48" rx="5" fill="#fff"/><rect x="1" y="1" width="47" height="46" rx="4" fill="#adadad"/><rect x="13.5" y="11" width="23.5" height="18" fill="#808080" stroke="#000" stroke-width="1.17"/><path d="M13.5 11 L37 29 M37 11 L13.5 29" stroke="#000" stroke-width="0.9" fill="none"/><text x="25.200" y="8.800" font-size="7.500" font-weight="bold" text-anchor="middle" fill="#26262e" textLength="13.8" lengthAdjust="spacingAndGlyphs">XXX</text><text x="25.200" y="43.600" font-size="15" text-anchor="middle" fill="#26262e">7-4</text><text transform="translate(9.6,21.3) rotate(-90)" font-size="6.6" font-weight="bold" text-anchor="middle" fill="#26262e" stroke="#26262e" stroke-width="0.25" textLength="29.6" lengthAdjust="spacingAndGlyphs">LXII Inf</text></g><g transform="translate(180.0,71.2)"><rect x="1" y="1.500" width="49" height="48.500" rx="5" fill="#000"/><rect x="0" y="0" width="49" height="48" rx="5" fill="#fff"/><rect x="1" y="1" width="47" height="46" rx="4" fill="#adadad"/><rect x="13.5" y="11" width="23.5" height="18" fill="#fff" stroke="#000" stroke-width="1.17"/><path d="M13.5 11 L37 29 M37 11 L13.5 29" stroke="#000" stroke-width="0.9" fill="none"/><text x="25.200" y="8.800" font-size="7.500" font-weight="bold" text-anchor="middle" fill="#f0f0f0" textLength="23" lengthAdjust="spacingAndGlyphs">XXXXX</text><text x="25.200" y="43.600" font-size="15" text-anchor="middle" fill="#f4f4f4">7(3)3</text><text transform="translate(9.6,21.3) rotate(-90)" font-size="6.6" font-weight="bold" text-anchor="middle" fill="#f0f0f0" stroke="#f0f0f0" stroke-width="0.25" textLength="29.6" lengthAdjust="spacingAndGlyphs">von Bock</text></g><g transform="translate(78.0,128.4)"><rect x="1" y="1.500" width="49" height="48.500" rx="5" fill="#000"/><rect x="0" y="0" width="49" height="48" rx="5" fill="#fff"/><rect x="1" y="1" width="47" height="46" rx="4" fill="#cc1060"/><rect x="13.5" y="11" width="23.5" height="18" fill="#fff" stroke="#f07878" stroke-width="1.35"/><path d="M13.5 11 L37 29 M37 11 L13.5 29" stroke="#e88080" stroke-width="0.9" fill="none"/><text x="25.200" y="8.800" font-size="7.500" font-weight="bold" text-anchor="middle" fill="#4a1038" textLength="18.4" lengthAdjust="spacingAndGlyphs">XXXX</text><text x="25.200" y="43.600" font-size="15" text-anchor="middle" fill="#4a1038">4-4</text><text transform="translate(9.6,20.5) rotate(-90)" font-size="6.6" font-weight="bold" text-anchor="middle" fill="#4a1038" stroke="#4a1038" stroke-width="0.25" textLength="22.2" lengthAdjust="spacingAndGlyphs">Poznan</text><text transform="translate(45,21) rotate(-90)" font-size="6.500" font-weight="bold" text-anchor="middle" fill="#4a1038">POL</text></g><g transform="translate(146.0,128.4)"><rect x="1" y="1.500" width="49" height="48.500" rx="5" fill="#000"/><rect x="0" y="0" width="49" height="48" rx="5" fill="#fff"/><rect x="1" y="1" width="47" height="46" rx="4" fill="#cc1060"/><rect x="13.5" y="11" width="23.5" height="18" fill="#fff" stroke="#f07878" stroke-width="1.35"/><path d="M13.5 11 L37 29 M37 11 L13.5 29" stroke="#e88080" stroke-width="0.9" fill="none"/><text x="25.200" y="8.800" font-size="7.500" font-weight="bold" text-anchor="middle" fill="#4a1038" textLength="18.4" lengthAdjust="spacingAndGlyphs">XXXX</text><text x="25.200" y="43.600" font-size="15" text-anchor="middle" fill="#4a1038">5-3</text><text transform="translate(9.6,20.5) rotate(-90)" font-size="6.6" font-weight="bold" text-anchor="middle" fill="#4a1038" stroke="#4a1038" stroke-width="0.25" textLength="22.2" lengthAdjust="spacingAndGlyphs">Poznan</text><text transform="translate(45,21) rotate(-90)" font-size="6.500" font-weight="bold" text-anchor="middle" fill="#4a1038">POL</text></g><g transform="translate(214.0,128.4)"><rect x="1" y="1.500" width="49" height="48.500" rx="5" fill="#000"/><rect x="0" y="0" width="49" height="48" rx="5" fill="#fff"/><rect x="1" y="1" width="47" height="46" rx="4" fill="#adadad"/><rect x="13.5" y="11" width="23.5" height="18" fill="#fff" stroke="#000" stroke-width="1.17"/><path d="M13.5 11 L37 29 M37 11 L13.5 29" stroke="#000" stroke-width="0.9" fill="none"/><text x="25.200" y="8.800" font-size="7.500" font-weight="bold" text-anchor="middle" fill="#f0f0f0" textLength="13.8" lengthAdjust="spacingAndGlyphs">XXX</text><text x="25.200" y="43.600" font-size="15" text-anchor="middle" fill="#f4f4f4">7-3</text><text transform="translate(9.6,21.3) rotate(-90)" font-size="6.6" font-weight="bold" text-anchor="middle" fill="#f0f0f0" stroke="#f0f0f0" stroke-width="0.25" textLength="29.6" lengthAdjust="spacingAndGlyphs">XVII Inf</text></g><g transform="translate(-24.0,185.6)"><rect x="1" y="1.500" width="49" height="48.500" rx="5" fill="#000"/><rect x="0" y="0" width="49" height="48" rx="5" fill="#fff"/><rect x="1" y="1" width="47" height="46" rx="4" fill="#adadad"/><rect x="13.5" y="11" width="23.5" height="18" fill="#808080" stroke="#000" stroke-width="1.17"/><rect x="17.025" y="14.6" width="16.45" height="10.8" rx="5.04" fill="none" stroke="#000" stroke-width="1.08"/><text x="25.200" y="8.800" font-size="7.500" font-weight="bold" text-anchor="middle" fill="#26262e" textLength="13.8" lengthAdjust="spacingAndGlyphs">XXX</text><text x="25.200" y="43.600" font-size="15" text-anchor="middle" fill="#26262e">6-6</text></g><g transform="translate(112.0,185.6)"><rect x="1" y="1.500" width="49" height="48.500" rx="5" fill="#000"/><rect x="0" y="0" width="49" height="48" rx="5" fill="#fff"/><rect x="1" y="1" width="47" height="46" rx="4" fill="#adadad"/><rect x="13.5" y="11" width="23.5" height="18" fill="#fff" stroke="#000" stroke-width="1.17"/><path d="M13.5 11 L37 29 M37 11 L13.5 29" stroke="#000" stroke-width="0.9" fill="none"/><text x="25.200" y="8.800" font-size="7.500" font-weight="bold" text-anchor="middle" fill="#f0f0f0" textLength="13.8" lengthAdjust="spacingAndGlyphs">XXX</text><text x="25.200" y="43.600" font-size="15" text-anchor="middle" fill="#f4f4f4">6-4</text><text transform="translate(9.6,21.3) rotate(-90)" font-size="6.6" font-weight="bold" text-anchor="middle" fill="#f0f0f0" stroke="#f0f0f0" stroke-width="0.25" textLength="29.6" lengthAdjust="spacingAndGlyphs">LXXI Inf</text></g><g transform="translate(180.0,185.6)"><rect x="1" y="1.500" width="49" height="48.500" rx="5" fill="#000"/><rect x="0" y="0" width="49" height="48" rx="5" fill="#fff"/><rect x="1" y="1" width="47" height="46" rx="4" fill="#adadad"/><rect x="13.5" y="11" width="23.5" height="18" fill="#808080" stroke="#000" stroke-width="1.17"/><path d="M13.5 11 L37 29 M37 11 L13.5 29" stroke="#000" stroke-width="0.9" fill="none"/><rect x="17.495" y="14.6" width="15.51" height="10.8" rx="3.96" fill="none" stroke="#000" stroke-width="1.08"/><text x="25.200" y="8.800" font-size="7.500" font-weight="bold" text-anchor="middle" fill="#26262e" textLength="13.8" lengthAdjust="spacingAndGlyphs">XXX</text><text x="25.200" y="43.600" font-size="15" text-anchor="middle" fill="#26262e">6-6</text><text transform="translate(9.6,21.3) rotate(-90)" font-size="6.6" font-weight="bold" text-anchor="middle" fill="#26262e" stroke="#26262e" stroke-width="0.25" textLength="29.6" lengthAdjust="spacingAndGlyphs">III Mech</text></g><g transform="translate(10.0,243.1)"><rect x="0" y="0" width="49" height="48" rx="5" fill="#fff"/><rect x="1" y="1" width="47" height="46" rx="4" fill="#adadad"/><text x="25" y="9" font-size="7.500" font-weight="bold" text-anchor="middle" fill="#26262e">XX</text><rect x="14" y="11.500" width="21" height="16" fill="#dce8ff" stroke="#000" stroke-width="1.200"/><path d="M19 19 L24.500 12.500 L30 19 Z" fill="#000"/><path d="M7.500 8 v11" stroke="#26262e" stroke-width="2" stroke-dasharray="1.200 0.800"/><path d="M7.500 8 v2.500" stroke="#3060c0" stroke-width="2"/></g><defs><linearGradient id="ag" x1="0" y1="0" x2="1" y2="0"><stop offset="0" stop-color="#f8d818"/><stop offset="0.55" stop-color="#f08a20"/><stop offset="1" stop-color="#e04820"/></linearGradient></defs><defs><linearGradient id="ag2" x1="0" y1="0" x2="1" y2="0"><stop offset="0" stop-color="#f09028"/><stop offset="0.5" stop-color="#e86020"/><stop offset="1" stop-color="#d83818"/></linearGradient></defs><g transform="translate(149.7,116.7) rotate(59.7)"><path d="M0 -1.5 L18.8109 -1.5 L18.8109 1.5 L0 1.5 Z" fill="#f8c818"/><path d="M19.3109 0 L13.3109 -7.5 L16.8109 -6.75 L29.3109 0 L16.8109 6.75 L13.3109 7.5 Z" fill="url(#ag2)"/></g><g transform="translate(191.2,116.2) rotate(121.0)"><path d="M0 -1.5 L19.0149 -1.5 L19.0149 1.5 L0 1.5 Z" fill="#f8c818"/><path d="M19.5149 0 L13.5149 -7.5 L17.0149 -6.75 L29.5149 0 L17.0149 6.75 L13.5149 7.5 Z" fill="url(#ag2)"/></g><g transform="translate(213.5,152.3) rotate(-179.4)"><path d="M0 -1.5 L17.8016 -1.5 L17.8016 1.5 L0 1.5 Z" fill="#f8c818"/><path d="M18.3016 0 L12.3016 -7.5 L15.8016 -6.75 L28.3016 0 L15.8016 6.75 L12.3016 7.5 Z" fill="url(#ag2)"/></g><g transform="translate(149.5,185.5) rotate(-60.5)"><path d="M0 -1.5 L15.9197 -1.5 L15.9197 1.5 L0 1.5 Z" fill="#f8c818"/><path d="M16.4197 0 L10.4197 -7.5 L13.9197 -6.75 L26.4197 0 L13.9197 6.75 L10.4197 7.5 Z" fill="url(#ag2)"/></g><g transform="translate(186.5,179.0) rotate(-117.3)"><path d="M0 -1.5 L8.06071 -1.5 L8.06071 1.5 L0 1.5 Z" fill="#f8c818"/><path d="M8.56071 0 L2.56071 -7.5 L6.06071 -6.75 L18.5607 0 L6.06071 6.75 L2.56071 7.5 Z" fill="url(#ag2)"/></g><path d="M163.0 148.3 l0 -8 l1.500 2 l1.500 -6 l2 4 l2.500 -8 l2.500 8 l2 -4 l1.500 6 l1.500 -2 l0 8 Z" fill="#f8f000" stroke="#e84818" stroke-width="1"/></svg>
<div style="position:absolute;left:1006px;top:73px;width:18px;height:262px;background:linear-gradient(90deg,#0c0a06 0,#d8d0bc 1px,#e8e2d2 3px,#b8ae96 4px,#3a3222 5px,#6a5e44 7px,#8a7e60 9px,#5a5038 11px,#2a2418 12px,#d8d0bc 13px,#e8e2d2 14px,#a89e86 15px,#0c0a06 16px);"></div>
<div style="position:absolute;left:726px;top:335px;width:280px;height:17px;background:linear-gradient(#0c0a06 0,#d8d0bc 1px,#e8e2d2 3px,#b8ae96 4px,#3a3222 5px,#6a5e44 7px,#8a7e60 9px,#5a5038 11px,#2a2418 12px,#d8d0bc 13px,#e8e2d2 14px,#a89e86 15px,#0c0a06 16px);"></div>
<div style="position:absolute;left:1006px;top:335px;width:18px;height:17px;background:#cfc8b6;border:1px solid #0c0a06;border-top-color:#e8e2d2;border-left-color:#e8e2d2;"></div>
<svg style="position:absolute;left:1006px;top:73px" width="18" height="17"><defs><linearGradient id="sgu" x1="0" y1="0" x2="1" y2="1"><stop offset="0" stop-color="#a89c80"/><stop offset="0.5" stop-color="#6a5e44"/><stop offset="1" stop-color="#3a3222"/></linearGradient></defs><rect width="18" height="17" fill="#0c0a06"/><rect x="1" y="1" width="16" height="15" fill="url(#sgu)"/><path d="M4.500 11 L9 4.500 L13.500 11 Z" fill="#e4dcc4"/></svg>
<svg style="position:absolute;left:1006px;top:318px" width="18" height="17"><defs><linearGradient id="sgd" x1="0" y1="0" x2="1" y2="1"><stop offset="0" stop-color="#a89c80"/><stop offset="0.5" stop-color="#6a5e44"/><stop offset="1" stop-color="#3a3222"/></linearGradient></defs><rect width="18" height="17" fill="#0c0a06"/><rect x="1" y="1" width="16" height="15" fill="url(#sgd)"/><path d="M4.500 5.500 L9 12 L13.500 5.500 Z" fill="#e4dcc4"/></svg>
<svg style="position:absolute;left:726px;top:335px" width="17" height="17"><defs><linearGradient id="sgl" x1="0" y1="0" x2="1" y2="1"><stop offset="0" stop-color="#a89c80"/><stop offset="0.5" stop-color="#6a5e44"/><stop offset="1" stop-color="#3a3222"/></linearGradient></defs><rect width="17" height="17" fill="#0c0a06"/><rect x="1" y="1" width="15" height="15" fill="url(#sgl)"/><path d="M11 4 L4.500 8.500 L11 13 Z" fill="#e4dcc4"/></svg>
<svg style="position:absolute;left:989px;top:335px" width="17" height="17"><defs><linearGradient id="sgr" x1="0" y1="0" x2="1" y2="1"><stop offset="0" stop-color="#a89c80"/><stop offset="0.5" stop-color="#6a5e44"/><stop offset="1" stop-color="#3a3222"/></linearGradient></defs><rect width="17" height="17" fill="#0c0a06"/><rect x="1" y="1" width="15" height="15" fill="url(#sgr)"/><path d="M6 4 L12.500 8.500 L6 13 Z" fill="#e4dcc4"/></svg>
<div style="position:absolute;left:1007px;top:143.5px;width:16px;height:14.5px;background:linear-gradient(135deg,#f4f0e4,#d8d0bc 50%,#a89e86);border:1px solid #0c0a06;box-shadow:inset 1px 1px 0 #fff;"></div>
<div style="position:absolute;left:857px;top:336px;width:15px;height:15px;background:linear-gradient(135deg,#f4f0e4,#d8d0bc 50%,#a89e86);border:1px solid #0c0a06;box-shadow:inset 1px 1px 0 #fff;"></div>
<div style="position:absolute;left:725px;top:72px;width:300px;height:281px;border:1px solid #0c0a06;border-left-color:#2a5a80;"></div>
</div>
</body>
</html>
